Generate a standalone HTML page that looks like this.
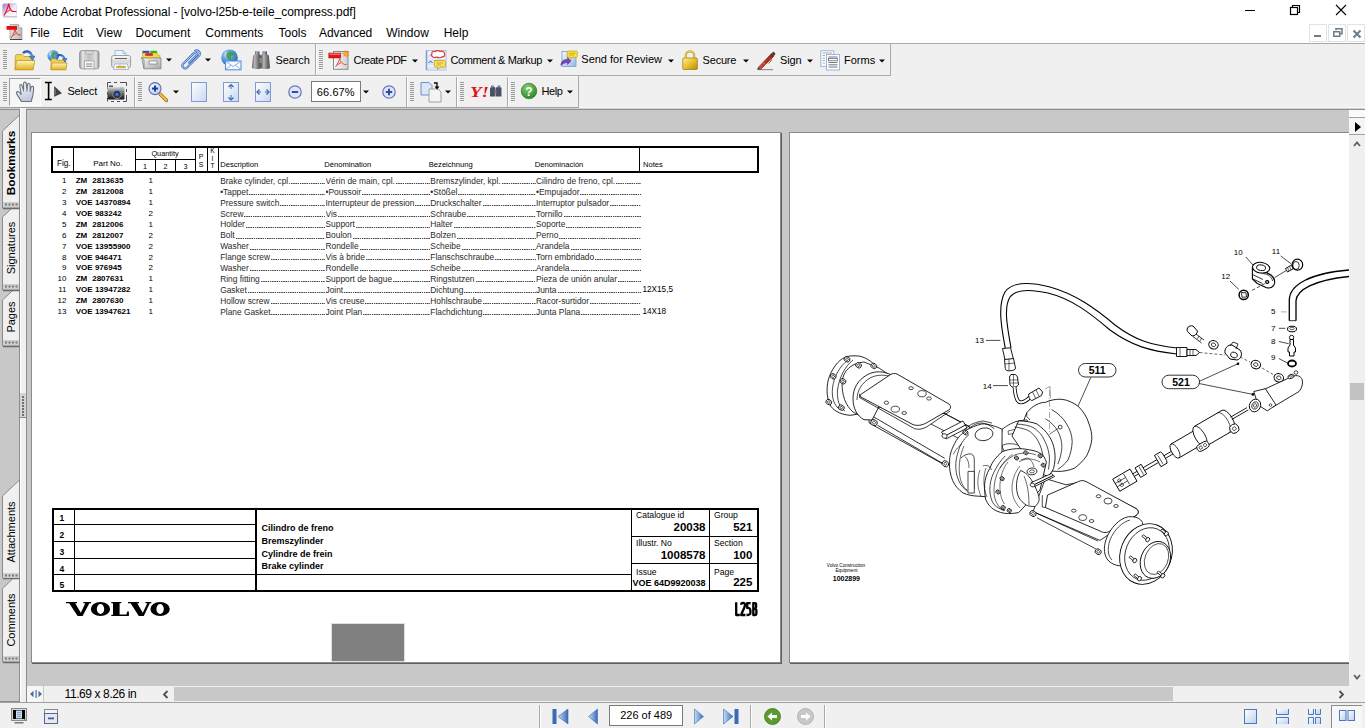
<!DOCTYPE html>
<html><head><meta charset="utf-8">
<style>
*{margin:0;padding:0;box-sizing:border-box}
html,body{width:1365px;height:728px;overflow:hidden;background:#f0f0f0;font-family:"Liberation Sans",sans-serif;color:#000;position:relative}
.a{position:absolute}
.t{position:absolute;white-space:nowrap;line-height:1}
svg{overflow:visible}
</style></head><body>

<div class="a" style="left:0px;top:0px;width:1365px;height:43px;background:#fff"></div>
<div class="t" style="left:23.50px;top:5.64px;font-size:12px;font-weight:normal;color:#000;letter-spacing:-0.05px;font-family:'Liberation Sans',sans-serif;">Adobe Acrobat Professional - [volvo-l25b-e-teile_compress.pdf]</div>
<svg class="a" style="left:2px;top:3px" width="16" height="15" viewBox="0 0 16 15"><defs><linearGradient id="tig" x1="0" y1="0" x2="1" y2="1"><stop offset="0" stop-color="#a070d0"/><stop offset="0.55" stop-color="#f4e8fa"/><stop offset="1" stop-color="#fff"/></linearGradient></defs><rect x="0.5" y="0.5" width="14" height="13" rx="2" fill="url(#tig)" stroke="#d0d0d0" stroke-width="0.6"/><rect x="1" y="13" width="14" height="1.5" fill="#c8c8c8"/><path d="M2 12.5C4 9 6 5 6.7 0.6C7 4 8.5 7 10.5 8.5H14.5" fill="none" stroke="#e01818" stroke-width="1.2"/><path d="M8.8 6.5C7.5 7.5 6 8 4.5 9.5" fill="none" stroke="#e01818" stroke-width="1"/></svg>
<svg class="a" style="left:6px;top:24px" width="17" height="16" viewBox="0 0 17 16"><defs><linearGradient id="mig" x1="0" y1="0" x2="1" y2="0"><stop offset="0" stop-color="#e0e0e0"/><stop offset="1" stop-color="#bcbcbc"/></linearGradient></defs><path d="M4 0.5H12.5L16 4V15.5H4Z" fill="url(#mig)" stroke="#999" stroke-width="0.7"/><path d="M12.5 0.5V4H16" fill="#f4f4f4" stroke="#999" stroke-width="0.6"/><rect x="4" y="15" width="12" height="1" fill="#444"/><rect x="0.5" y="2" width="10.5" height="3.8" fill="#e41010"/><path d="M5 14C7 11 8.5 8 9 5.5C9.5 8 10.5 10 13 11H15" fill="none" stroke="#e83030" stroke-width="1"/><path d="M10.2 9.5C9 10.2 8 10.8 7 11.8" fill="none" stroke="#e83030" stroke-width="0.8"/></svg>
<div class="a" style="left:1245px;top:10px;width:10px;height:1px;background:#000"></div>
<svg class="a" style="left:1289px;top:4px" width="12" height="12" viewBox="0 0 12 12"><rect x="1.5" y="3.5" width="7" height="7" fill="none" stroke="#000" stroke-width="1.2"/><path d="M3.5 3.5V1.5h7v7h-2" fill="none" stroke="#000" stroke-width="1.2"/></svg>
<svg class="a" style="left:1335px;top:4px" width="12" height="12" viewBox="0 0 12 12"><path d="M1 1L11 11M11 1L1 11" stroke="#000" stroke-width="1.1"/></svg>
<div class="t" style="left:30.30px;top:27.04px;font-size:12px;font-weight:normal;color:#000;font-family:'Liberation Sans',sans-serif;">File</div>
<div class="t" style="left:62.40px;top:27.04px;font-size:12px;font-weight:normal;color:#000;font-family:'Liberation Sans',sans-serif;">Edit</div>
<div class="t" style="left:96.00px;top:27.04px;font-size:12px;font-weight:normal;color:#000;font-family:'Liberation Sans',sans-serif;">View</div>
<div class="t" style="left:135.60px;top:27.04px;font-size:12px;font-weight:normal;color:#000;font-family:'Liberation Sans',sans-serif;">Document</div>
<div class="t" style="left:205.30px;top:27.04px;font-size:12px;font-weight:normal;color:#000;font-family:'Liberation Sans',sans-serif;">Comments</div>
<div class="t" style="left:278.50px;top:27.04px;font-size:12px;font-weight:normal;color:#000;font-family:'Liberation Sans',sans-serif;">Tools</div>
<div class="t" style="left:318.90px;top:27.04px;font-size:12px;font-weight:normal;color:#000;font-family:'Liberation Sans',sans-serif;">Advanced</div>
<div class="t" style="left:386.20px;top:27.04px;font-size:12px;font-weight:normal;color:#000;font-family:'Liberation Sans',sans-serif;">Window</div>
<div class="t" style="left:443.70px;top:27.04px;font-size:12px;font-weight:normal;color:#000;font-family:'Liberation Sans',sans-serif;">Help</div>
<div class="a" style="left:1309px;top:24px;width:18px;height:18px;border:1px solid #e3e3e3;background:#fff"></div>
<div class="a" style="left:1328px;top:24px;width:18px;height:18px;border:1px solid #e3e3e3;background:#fff"></div>
<div class="a" style="left:1347px;top:24px;width:18px;height:18px;border:1px solid #e3e3e3;background:#fff"></div>
<div class="a" style="left:1314px;top:35px;width:7px;height:2px;background:#6d7b8b"></div>
<svg class="a" style="left:1333px;top:28px" width="10" height="10" viewBox="0 0 10 10"><rect x="0.75" y="3.75" width="6" height="4.5" fill="none" stroke="#6d7b8b" stroke-width="1.5"/><path d="M3 2.2V0.75h6v5H7.2" fill="none" stroke="#6d7b8b" stroke-width="1.5"/></svg>
<svg class="a" style="left:1352px;top:29px" width="10" height="10" viewBox="0 0 10 10"><path d="M1.5 1.5L8.5 8.5M8.5 1.5L1.5 8.5" stroke="#6d7b8b" stroke-width="2"/></svg>
<div class="a" style="left:0px;top:43px;width:1365px;height:1px;background:#a9a9a9"></div>
<div class="a" style="left:0px;top:44px;width:1365px;height:64px;background:#f0f0f0"></div>
<div class="a" style="left:0px;top:75px;width:891px;height:1px;background:#a9a9a9"></div>
<svg class="a" style="left:3px;top:50px" width="4" height="20" viewBox="0 0 4 20"><rect x="0" y="0" width="4" height="1" fill="#9a9a9a"/><rect x="0" y="2" width="4" height="1" fill="#9a9a9a"/><rect x="0" y="4" width="4" height="1" fill="#9a9a9a"/><rect x="0" y="6" width="4" height="1" fill="#9a9a9a"/><rect x="0" y="8" width="4" height="1" fill="#9a9a9a"/><rect x="0" y="10" width="4" height="1" fill="#9a9a9a"/><rect x="0" y="12" width="4" height="1" fill="#9a9a9a"/><rect x="0" y="14" width="4" height="1" fill="#9a9a9a"/><rect x="0" y="16" width="4" height="1" fill="#9a9a9a"/><rect x="0" y="18" width="4" height="1" fill="#9a9a9a"/></svg>
<svg class="a" style="left:14px;top:50px" width="22" height="21" viewBox="0 0 22 21"><defs><linearGradient id="fold" x1="0" y1="0" x2="0" y2="1"><stop offset="0" stop-color="#fff6b8"/><stop offset="1" stop-color="#e0b020"/></linearGradient>
<linearGradient id="arw" x1="0" y1="0" x2="1" y2="1"><stop offset="0" stop-color="#2050a0"/><stop offset="1" stop-color="#60a0e8"/></linearGradient></defs>
<path d="M1.2 19.5V6.5C1.2 5.5 2 4.5 3 4.5H8L10 6.5H17C18 6.5 19 7.3 19 8.3V19.5Z" fill="#f0d060" stroke="#c09a22" stroke-width="0.8"/>
<path d="M1 19.8L2.5 10.5H20.8L19 19.8Z" fill="url(#fold)" stroke="#c09a22" stroke-width="0.8"/>
<path d="M9 3.2C11 0.8 15.5 0.5 17.5 4.5L18.5 6.5" fill="none" stroke="url(#arw)" stroke-width="2.4"/><path d="M15.2 6.2L21 6L18.5 10.5Z" fill="#4a88d8" stroke="#2050a0" stroke-width="0.5"/></svg>
<svg class="a" style="left:46px;top:50px" width="22" height="21" viewBox="0 0 22 21"><defs><radialGradient id="gl2" cx="0.35" cy="0.3" r="0.75"><stop offset="0" stop-color="#e8f4ff"/><stop offset="0.4" stop-color="#6aa8ec"/><stop offset="1" stop-color="#2060b8"/></radialGradient></defs>
<circle cx="7.2" cy="5.8" r="5.8" fill="url(#gl2)"/><path d="M6 1.5C8 1.2 10 2 11 3.5C10 4.5 8.5 4 8 5.5C7.5 7 8.5 8 8 9C7 9 6 7.5 5.5 6.5C5 5.5 4.5 4 6 1.5Z" fill="#3c9a3a" opacity="0.8"/>
<path d="M5 19.5V10C5 9.3 5.5 8.8 6.2 8.8H10L11.5 10.3H18.5C19.2 10.3 19.7 10.8 19.7 11.5V19.5Z" fill="#f0d060" stroke="#c09a22" stroke-width="0.8"/>
<path d="M4.8 19.8L6 13H21L19.8 19.8Z" fill="url(#fold)" stroke="#c09a22" stroke-width="0.8"/>
<path d="M11.5 6C13.5 4.5 17 4.8 18.5 8L19 9" fill="none" stroke="url(#arw)" stroke-width="2"/><path d="M16.3 8.6L21 8.5L19 12.2Z" fill="#4a88d8" stroke="#2050a0" stroke-width="0.5"/></svg>
<svg class="a" style="left:79px;top:50px" width="21" height="20" viewBox="0 0 21 20"><defs><linearGradient id="dk" x1="0" y1="0" x2="1" y2="0"><stop offset="0" stop-color="#9a9a9a"/><stop offset="0.15" stop-color="#e0e0e0"/><stop offset="0.5" stop-color="#c0c0c0"/><stop offset="0.85" stop-color="#e0e0e0"/><stop offset="1" stop-color="#909090"/></linearGradient></defs>
<rect x="0.6" y="0.6" width="19.4" height="18.2" rx="2.5" fill="url(#dk)" stroke="#8a8a8a" stroke-width="0.8"/>
<rect x="6.5" y="1" width="7.5" height="3" fill="#d8d8d8" stroke="#9a9a9a" stroke-width="0.5"/><rect x="5.5" y="11" width="9.5" height="7.8" fill="#fafafa" stroke="#8a8a8a" stroke-width="0.6"/>
<path d="M7 14H13.5M7 16.3H13.5" stroke="#777" stroke-width="0.9"/></svg>
<svg class="a" style="left:111px;top:50px" width="20" height="20" viewBox="0 0 20 20"><defs><linearGradient id="prt" x1="0" y1="0" x2="0" y2="1"><stop offset="0" stop-color="#fafafa"/><stop offset="0.5" stop-color="#d8d8d8"/><stop offset="1" stop-color="#f0f0f0"/></linearGradient></defs><path d="M4 0.5H12L15 3.5V8H4Z" fill="#eef4ff" stroke="#8ab0d8" stroke-width="0.8"/><path d="M12 0.5V3.5H15" fill="none" stroke="#8ab0d8" stroke-width="0.7"/><rect x="0.6" y="5.5" width="19" height="12" rx="2" fill="url(#prt)" stroke="#8a8a8a" stroke-width="0.8"/><rect x="4" y="8" width="12" height="1" fill="#666"/><path d="M3.5 14H16.5L17.5 19.5H2.5Z" fill="#fff" stroke="#7aa0d0" stroke-width="0.7"/><path d="M5 16H15V18.3H5Z" fill="#e8b040"/><path d="M7 16.5L9 15.5L11 17L13 15.8" stroke="#6aa040" stroke-width="0.6" fill="none"/></svg>
<svg class="a" style="left:141px;top:50px" width="21" height="20" viewBox="0 0 21 20"><defs><linearGradient id="org" x1="0" y1="0" x2="1" y2="1"><stop offset="0" stop-color="#fafafa"/><stop offset="1" stop-color="#a8a8a8"/></linearGradient></defs><rect x="1.5" y="0.8" width="6.8" height="2.6" fill="#1a50c8"/><rect x="9.3" y="0.8" width="6.8" height="2.6" fill="#10c020"/><path d="M1.5 3H16.5V5H19V8H1.5Z" fill="#f4d84a" stroke="#c8a020" stroke-width="0.5"/><rect x="4.3" y="3.2" width="7.5" height="2.6" fill="#e02030"/><path d="M0.5 7.5L3 18.8H20V8H1Z" fill="url(#org)" stroke="#7a7a7a" stroke-width="0.7"/><path d="M0.5 7.5L3 10V18.8" fill="none" stroke="#707070" stroke-width="0.7"/><rect x="8" y="11" width="8" height="3" fill="#fff" stroke="#777" stroke-width="0.7"/></svg>
<svg class="a" style="left:166px;top:58px" width="6" height="4" viewBox="0 0 6 4"><path d="M0 0.5H6L3 3.5Z" fill="#000"/></svg>
<svg class="a" style="left:180px;top:50px" width="20" height="20" viewBox="0 0 20 20"><g transform="rotate(-45 10 10)"><path d="M6.5 11.3H17.6A1.7 1.7 0 0 0 17.6 7.9H2.6A2.7 2.7 0 0 0 2.6 13.3H19.3A3 3 0 0 0 19.3 7.3" fill="none" stroke="#3d6fc0" stroke-width="2.2"/><path d="M6.5 11.3H17.6A1.7 1.7 0 0 0 17.6 7.9H2.6A2.7 2.7 0 0 0 2.6 13.3H19.3A3 3 0 0 0 19.3 7.3" fill="none" stroke="#cfe0f8" stroke-width="0.8"/></g></svg>
<svg class="a" style="left:204.5px;top:58px" width="6" height="4" viewBox="0 0 6 4"><path d="M0 0.5H6L3 3.5Z" fill="#000"/></svg>
<svg class="a" style="left:220px;top:49px" width="22" height="22" viewBox="0 0 22 22"><defs><radialGradient id="gl" cx="0.35" cy="0.3" r="0.75"><stop offset="0" stop-color="#e8f4ff"/><stop offset="0.35" stop-color="#6aa8ec"/><stop offset="1" stop-color="#1f5fb8"/></radialGradient></defs><circle cx="9.5" cy="8.7" r="8.3" fill="url(#gl)"/><path d="M8 2.5C11 2 14 3 15.5 5.5C14 6.5 12 6 11 7.5C10 9 12 10.5 11 12C9.5 12 8.5 10 7.5 9C6.5 8 5.5 6.5 6.5 4.5Z" fill="#3c9a3a" opacity="0.85"/><path d="M16 8C17 10 17 12 16 13L15 11Z" fill="#3c9a3a"/><rect x="5.5" y="12" width="15.5" height="8.8" fill="#f8f8ff" stroke="#5a90d8" stroke-width="1.1"/><path d="M6 12.5L13.2 17.5L20.5 12.5M6 20.3L11 16M20.5 20.3L15.5 16" fill="none" stroke="#7aa8e0" stroke-width="0.9"/></svg>
<svg class="a" style="left:251px;top:50px" width="20" height="20" viewBox="0 0 20 20"><defs><linearGradient id="bn" x1="0" y1="0" x2="1" y2="0"><stop offset="0" stop-color="#5a5a5a"/><stop offset="0.3" stop-color="#b8b8b8"/><stop offset="0.7" stop-color="#707070"/><stop offset="1" stop-color="#505050"/></linearGradient></defs><rect x="4" y="1" width="4.5" height="5" rx="1" fill="url(#bn)"/><rect x="11.5" y="1" width="4.5" height="5" rx="1" fill="url(#bn)"/><rect x="4.8" y="1" width="3" height="1.2" fill="#8ab0d8"/><rect x="12.3" y="1" width="3" height="1.2" fill="#8ab0d8"/><path d="M2 6.5C2 5 3 4.5 4 4.5H8.5C9.5 4.5 10 5 10 6.5V17.5C10 18.5 9 19 6 19C3 19 1 18.5 1 17.5Z" fill="url(#bn)"/><path d="M18 6.5C18 5 17 4.5 16 4.5H11.5C10.5 4.5 10 5 10 6.5V17.5C10 18.5 11 19 14 19C17 19 19 18.5 19 17.5Z" fill="url(#bn)"/><rect x="8.5" y="8" width="3" height="5" fill="#888"/></svg>
<div class="t" style="left:275.50px;top:55.29px;font-size:11px;font-weight:normal;color:#000;letter-spacing:-0.1px;font-family:'Liberation Sans',sans-serif;">Search</div>
<div class="a" style="left:315px;top:44px;width:1px;height:31px;background:#a9a9a9"></div>
<div class="a" style="left:316px;top:44px;width:1px;height:31px;background:#fff"></div>
<svg class="a" style="left:319px;top:50px" width="4" height="20" viewBox="0 0 4 20"><rect x="0" y="0" width="4" height="1" fill="#9a9a9a"/><rect x="0" y="2" width="4" height="1" fill="#9a9a9a"/><rect x="0" y="4" width="4" height="1" fill="#9a9a9a"/><rect x="0" y="6" width="4" height="1" fill="#9a9a9a"/><rect x="0" y="8" width="4" height="1" fill="#9a9a9a"/><rect x="0" y="10" width="4" height="1" fill="#9a9a9a"/><rect x="0" y="12" width="4" height="1" fill="#9a9a9a"/><rect x="0" y="14" width="4" height="1" fill="#9a9a9a"/><rect x="0" y="16" width="4" height="1" fill="#9a9a9a"/><rect x="0" y="18" width="4" height="1" fill="#9a9a9a"/></svg>
<svg class="a" style="left:328px;top:50px" width="22" height="21" viewBox="0 0 22 21"><defs><linearGradient id="cpg" x1="0" y1="0" x2="1" y2="0"><stop offset="0" stop-color="#fafafa"/><stop offset="1" stop-color="#d0d0d0"/></linearGradient></defs><rect x="5.5" y="1.5" width="14.5" height="17.8" fill="url(#cpg)" stroke="#8a8a8a" stroke-width="1"/><rect x="0.8" y="3" width="12" height="5" fill="#e01818" stroke="#b01010" stroke-width="0.5"/><rect x="1.5" y="3.6" width="10.5" height="1.2" fill="#ff8080"/><path d="M7.5 17C9.5 14 11 11 11.7 8.5C12 11 13.5 13 16.5 14.5H18.5M13 12.5C11.5 13.5 10.5 14 9 15" fill="none" stroke="#e84848" stroke-width="1"/><path d="M17.7 0.3L18.5 2.3L20.8 1.5L19.6 3.4L21.3 4.8L19 5L18.8 7L17.5 5.3L15.7 6.3L16.4 4.3L14.5 3.2L16.7 2.7Z" fill="#ffb020" stroke="#e07000" stroke-width="0.4"/></svg>
<div class="t" style="left:353.50px;top:54.69px;font-size:11px;font-weight:normal;color:#000;letter-spacing:-0.5px;font-family:'Liberation Sans',sans-serif;">Create PDF</div>
<svg class="a" style="left:411.5px;top:58.5px" width="6" height="4" viewBox="0 0 6 4"><path d="M0 0.5H6L3 3.5Z" fill="#000"/></svg>
<svg class="a" style="left:425px;top:50px" width="22" height="21" viewBox="0 0 22 21"><rect x="1" y="0.5" width="20" height="19.5" fill="#eef3fb" stroke="#9fb8dc" stroke-width="0.8"/><rect x="1" y="0.5" width="1.3" height="19.5" fill="#7a9fd8"/><path d="M3 6H20M3 10H20M3 14H9M3 18H20" stroke="#b8cce8" stroke-width="0.8"/><path d="M7 4C6 2 8.5 0.8 10 1.6C11 0.3 14 0.3 15 1.5C17 0.6 20 1.8 19.5 3.8C20.5 5 19 7.3 17 6.8C16 8 13 8 12 7C10 8 7.5 7.5 7.5 6.2C5.8 6 5.5 4.5 7 4Z" fill="#fff" stroke="#e03030" stroke-width="1.1"/><path d="M3.5 13L5.5 11L7.5 13" fill="none" stroke="#2040d0" stroke-width="1"/><path d="M9.5 10.5H19.5C20.3 10.5 20.5 11 20.5 11.8V16C20.5 16.8 20 17.2 19.5 17.2H15L12.5 19.8V17.2H10.5C9.8 17.2 9.3 16.8 9.3 16V11.8C9.3 11 9.8 10.5 10.5 10.5Z" fill="#f8e060" stroke="#c8a020" stroke-width="0.8"/><path d="M11.5 13H18M11.5 15H16" stroke="#b89020" stroke-width="0.7"/></svg>
<div class="t" style="left:450.50px;top:54.69px;font-size:11px;font-weight:normal;color:#000;letter-spacing:-0.4px;font-family:'Liberation Sans',sans-serif;">Comment &amp; Markup</div>
<svg class="a" style="left:546.5px;top:58.5px" width="6" height="4" viewBox="0 0 6 4"><path d="M0 0.5H6L3 3.5Z" fill="#000"/></svg>
<svg class="a" style="left:560px;top:50px" width="18" height="18" viewBox="0 0 18 18"><defs><linearGradient id="sfr" x1="0" y1="0" x2="1" y2="1"><stop offset="0" stop-color="#f4f8ff"/><stop offset="1" stop-color="#9ab8e0"/></linearGradient></defs><rect x="2" y="1.5" width="14" height="15" fill="url(#sfr)" stroke="#7a9ccc" stroke-width="0.8"/><path d="M8 1H16.5C17 1 17.3 1.3 17.3 1.8V6.5C17.3 7 17 7.3 16.5 7.3H12.5L10.5 9.3V7.3H8C7.5 7.3 7.2 7 7.2 6.5V1.8C7.2 1.3 7.5 1 8 1Z" fill="#f8e040" stroke="#c8a010" stroke-width="0.7"/><path d="M9 3.3H15.5M9 5H14" stroke="#c09010" stroke-width="0.6"/><path d="M0.8 15.5C1 11 4 9.5 7.5 9.5V7.5L11 11L7.5 14.5V12.5C5 12.5 3 13.5 0.8 15.5Z" fill="#7048b8" stroke="#503090" stroke-width="0.5"/></svg>
<div class="t" style="left:581.30px;top:54.49px;font-size:11px;font-weight:normal;color:#000;font-family:'Liberation Sans',sans-serif;">Send for Review</div>
<svg class="a" style="left:667.5px;top:58.5px" width="6" height="4" viewBox="0 0 6 4"><path d="M0 0.5H6L3 3.5Z" fill="#000"/></svg>
<svg class="a" style="left:682px;top:50px" width="17" height="21" viewBox="0 0 17 21"><defs><linearGradient id="lk" x1="0" y1="0" x2="1" y2="1"><stop offset="0" stop-color="#fff0a0"/><stop offset="0.5" stop-color="#e8c030"/><stop offset="1" stop-color="#b08a10"/></linearGradient></defs><path d="M3.8 8.5V5.5A4.2 4.2 0 0 1 12.2 5.5V8.5" fill="none" stroke="#c8a018" stroke-width="2.2"/><path d="M3.8 8.5V5.5A4.2 4.2 0 0 1 12.2 5.5V8.5" fill="none" stroke="#f8e890" stroke-width="0.7"/><rect x="0.8" y="8" width="14.5" height="11.5" rx="0.8" fill="url(#lk)" stroke="#a88010" stroke-width="0.8"/></svg>
<div class="t" style="left:702.60px;top:54.69px;font-size:11px;font-weight:normal;color:#000;letter-spacing:-0.2px;font-family:'Liberation Sans',sans-serif;">Secure</div>
<svg class="a" style="left:742.5px;top:58.5px" width="6" height="4" viewBox="0 0 6 4"><path d="M0 0.5H6L3 3.5Z" fill="#000"/></svg>
<svg class="a" style="left:756px;top:50px" width="20" height="21" viewBox="0 0 20 21"><defs><linearGradient id="pn" x1="0" y1="0" x2="1" y2="0"><stop offset="0" stop-color="#e05040"/><stop offset="1" stop-color="#8a1a10"/></linearGradient></defs><path d="M2.2 17.5L15.5 3.5L18 6L4.5 19.5Z" fill="url(#pn)" stroke="#701810" stroke-width="0.6"/><path d="M15.5 3.5L17.3 1.5L19.6 3.8L18 6Z" fill="#404040"/><path d="M13 8.5C15 7.5 16 9 15 11L12.5 13.5" fill="none" stroke="#b05020" stroke-width="1"/><path d="M7 12.5L9 14.5" stroke="#e0b040" stroke-width="0.8"/><path d="M2.2 17.5L1 19.8L4.5 19.5Z" fill="#303030"/><path d="M2.5 19.7H17" stroke="#606060" stroke-width="0.8"/></svg>
<div class="t" style="left:780.00px;top:54.69px;font-size:11px;font-weight:normal;color:#000;letter-spacing:-0.1px;font-family:'Liberation Sans',sans-serif;">Sign</div>
<svg class="a" style="left:806.5px;top:58.5px" width="6" height="4" viewBox="0 0 6 4"><path d="M0 0.5H6L3 3.5Z" fill="#000"/></svg>
<svg class="a" style="left:820px;top:50px" width="20" height="21" viewBox="0 0 20 21"><rect x="0.8" y="0.8" width="13" height="15.5" fill="#fff" stroke="#8ab0e0" stroke-width="0.9"/><path d="M2.5 3H12M2.5 5.5H5M2.5 8H5M2.5 10.5H5M2.5 13H5" stroke="#888" stroke-width="0.7"/><rect x="6.5" y="4.5" width="13" height="15.5" fill="#fff" stroke="#8ab0e0" stroke-width="0.9"/><path d="M8.5 7H17.5M8.5 12.5H17.5M8.5 14.8H17.5M8.5 17H17.5" stroke="#555" stroke-width="0.8"/><rect x="8.5" y="8.6" width="9" height="2.2" fill="none" stroke="#555" stroke-width="0.7"/></svg>
<div class="t" style="left:844.00px;top:54.69px;font-size:11px;font-weight:normal;color:#000;font-family:'Liberation Sans',sans-serif;">Forms</div>
<svg class="a" style="left:879px;top:58.5px" width="6" height="4" viewBox="0 0 6 4"><path d="M0 0.5H6L3 3.5Z" fill="#000"/></svg>
<div class="a" style="left:890px;top:44px;width:1px;height:32px;background:#a9a9a9"></div>
<div class="a" style="left:0px;top:76px;width:578px;height:1px;background:#fcfcfc"></div>
<svg class="a" style="left:3px;top:82px" width="4" height="20" viewBox="0 0 4 20"><rect x="0" y="0" width="4" height="1" fill="#9a9a9a"/><rect x="0" y="2" width="4" height="1" fill="#9a9a9a"/><rect x="0" y="4" width="4" height="1" fill="#9a9a9a"/><rect x="0" y="6" width="4" height="1" fill="#9a9a9a"/><rect x="0" y="8" width="4" height="1" fill="#9a9a9a"/><rect x="0" y="10" width="4" height="1" fill="#9a9a9a"/><rect x="0" y="12" width="4" height="1" fill="#9a9a9a"/><rect x="0" y="14" width="4" height="1" fill="#9a9a9a"/><rect x="0" y="16" width="4" height="1" fill="#9a9a9a"/><rect x="0" y="18" width="4" height="1" fill="#9a9a9a"/></svg>
<div class="a" style="left:9px;top:78px;width:32px;height:28px;background:#f6f6f6;border-left:1px solid #a0a0a0;border-top:1px solid #a0a0a0;border-right:1px solid #fff;border-bottom:1px solid #fff"></div>
<svg class="a" style="left:15px;top:81px" width="20" height="21" viewBox="0 0 20 21"><defs><linearGradient id="hnd" x1="0" y1="0" x2="0.3" y2="1"><stop offset="0" stop-color="#ffffff"/><stop offset="1" stop-color="#c4c8dc"/></linearGradient></defs><path d="M6.5 20.5C5 18 3 15.5 1.5 12.5C1 11 2.5 10 4 11L6.2 13.5L4.8 5C4.6 3.5 6.6 3 7 4.5L8.5 9L8.6 2.2C8.7 0.8 11 0.8 11.2 2.2L12 9L12.5 3.5C12.7 2.2 15 2.2 15 3.8L15.3 9.5L16 6.5C16.3 5 18.7 5 18.6 6.8C18.5 10 18.3 14 17 17.5L16.2 20.5Z" fill="url(#hnd)" stroke="#6b7280" stroke-width="1.1" stroke-linejoin="round"/><path d="M8.5 9V10.5M12 9V10.5M15.3 9.5V11" stroke="#6b7280" stroke-width="0.9"/></svg>
<svg class="a" style="left:44px;top:81px" width="20" height="20" viewBox="0 0 20 20"><path d="M0.9 1.5H7.8M0.9 18.5H7.8M4.6 1.5V18.5" stroke="#000" stroke-width="1.6"/><path d="M10.2 5V15.8L18 12.3Z" fill="#444"/><path d="M11.3 8V13.5" stroke="#888" stroke-width="0.8"/></svg>
<div class="t" style="left:67.40px;top:86.19px;font-size:11px;font-weight:normal;color:#000;letter-spacing:-0.15px;font-family:'Liberation Sans',sans-serif;">Select</div>
<svg class="a" style="left:107px;top:82px" width="20" height="20" viewBox="0 0 20 20"><defs><linearGradient id="cam" x1="0" y1="0" x2="0" y2="1"><stop offset="0" stop-color="#e8e8e8"/><stop offset="0.35" stop-color="#8a8a8a"/><stop offset="1" stop-color="#101010"/></linearGradient></defs><path d="M0.5 4V0.5H4M7 0.5H10M13 0.5H16M19.5 4V0.5H16M19.5 7V10M19.5 13V19.5H16M13 19.5H10M7 19.5H4M0.5 19.5V16M0.5 13V10M0.5 7V4" fill="none" stroke="#505050" stroke-width="1"/><rect x="0.5" y="4.5" width="17" height="13" rx="1" fill="url(#cam)"/><rect x="2" y="3.5" width="4" height="1.5" fill="#555"/><rect x="13" y="5.5" width="3" height="1.5" fill="#6ac0f0"/><circle cx="10" cy="12.5" r="4.2" fill="#303848" stroke="#8a9ab0" stroke-width="0.9"/><circle cx="10" cy="12.5" r="1.8" fill="#3a70e0"/></svg>
<div class="a" style="left:134px;top:77px;width:1px;height:30px;background:#a9a9a9"></div>
<div class="a" style="left:135px;top:77px;width:1px;height:30px;background:#fff"></div>
<svg class="a" style="left:138px;top:82px" width="4" height="20" viewBox="0 0 4 20"><rect x="0" y="0" width="4" height="1" fill="#9a9a9a"/><rect x="0" y="2" width="4" height="1" fill="#9a9a9a"/><rect x="0" y="4" width="4" height="1" fill="#9a9a9a"/><rect x="0" y="6" width="4" height="1" fill="#9a9a9a"/><rect x="0" y="8" width="4" height="1" fill="#9a9a9a"/><rect x="0" y="10" width="4" height="1" fill="#9a9a9a"/><rect x="0" y="12" width="4" height="1" fill="#9a9a9a"/><rect x="0" y="14" width="4" height="1" fill="#9a9a9a"/><rect x="0" y="16" width="4" height="1" fill="#9a9a9a"/><rect x="0" y="18" width="4" height="1" fill="#9a9a9a"/></svg>
<svg class="a" style="left:148px;top:82px" width="21" height="21" viewBox="0 0 21 21"><defs><radialGradient id="zl" cx="0.4" cy="0.35" r="0.7"><stop offset="0" stop-color="#ffffff"/><stop offset="1" stop-color="#a8c8f0"/></radialGradient></defs><path d="M12 12L18.5 18.5" stroke="#a06010" stroke-width="3.2" stroke-linecap="round"/><path d="M12 12L18.5 18.5" stroke="#f0c840" stroke-width="1.8" stroke-linecap="round"/><circle cx="7" cy="6.6" r="6" fill="url(#zl)" stroke="#6a68b8" stroke-width="1.1"/><path d="M4 6.6H10M7 3.6V9.6" stroke="#1a3a98" stroke-width="2"/></svg>
<svg class="a" style="left:172.5px;top:89.5px" width="6" height="4" viewBox="0 0 6 4"><path d="M0 0.5H6L3 3.5Z" fill="#000"/></svg>
<svg class="a" style="left:191px;top:82px" width="17" height="21" viewBox="0 0 17 21"><defs><linearGradient id="pg" x1="0" y1="0" x2="1" y2="1"><stop offset="0" stop-color="#fff"/><stop offset="1" stop-color="#c8d8f0"/></linearGradient></defs><rect x="0.5" y="0.5" width="15" height="19" fill="url(#pg)" stroke="#7c9cd0" stroke-width="1"/></svg>
<svg class="a" style="left:223px;top:82px" width="17" height="21" viewBox="0 0 17 21"><rect x="0.5" y="0.5" width="15" height="19" fill="url(#pg)" stroke="#7c9cd0" stroke-width="1"/><path d="M8 3v4M8 13v5" stroke="#3a64b0" stroke-width="1"/><path d="M5.5 5L8 2.5 10.5 5M5.5 15.5L8 18l2.5-2.5" fill="none" stroke="#3a64b0" stroke-width="1.2"/></svg>
<svg class="a" style="left:255px;top:82px" width="17" height="21" viewBox="0 0 17 21"><rect x="0.5" y="0.5" width="15" height="19" fill="url(#pg)" stroke="#7c9cd0" stroke-width="1"/><path d="M2 10h4M10 10h4" stroke="#3a64b0" stroke-width="1"/><path d="M4.5 7.5L2 10l2.5 2.5M11.5 7.5L14 10l-2.5 2.5" fill="none" stroke="#3a64b0" stroke-width="1.2"/></svg>
<svg class="a" style="left:288px;top:85px" width="14" height="14" viewBox="0 0 14 14"><circle cx="7" cy="7" r="6.2" fill="#dfe6fb" stroke="#6a7ab8" stroke-width="1.3"/><path d="M3.8 7h6.4" stroke="#3050a8" stroke-width="2"/></svg>
<div class="a" style="left:311px;top:81px;width:50px;height:21px;background:#fff;border:1px solid #7a7a7a"></div>
<div class="t" style="left:316.80px;top:86.69px;font-size:11px;font-weight:normal;color:#000;letter-spacing:0.1px;font-family:'Liberation Sans',sans-serif;">66.67%</div>
<svg class="a" style="left:362.5px;top:89.5px" width="6" height="4" viewBox="0 0 6 4"><path d="M0 0.5H6L3 3.5Z" fill="#000"/></svg>
<svg class="a" style="left:382px;top:85px" width="14" height="14" viewBox="0 0 14 14"><circle cx="7" cy="7" r="6.2" fill="#dfe6fb" stroke="#6a7ab8" stroke-width="1.3"/><path d="M3.8 7h6.4M7 3.8v6.4" stroke="#3050a8" stroke-width="2"/></svg>
<div class="a" style="left:406px;top:77px;width:1px;height:30px;background:#a9a9a9"></div>
<div class="a" style="left:407px;top:77px;width:1px;height:30px;background:#fff"></div>
<svg class="a" style="left:410px;top:82px" width="4" height="20" viewBox="0 0 4 20"><rect x="0" y="0" width="4" height="1" fill="#9a9a9a"/><rect x="0" y="2" width="4" height="1" fill="#9a9a9a"/><rect x="0" y="4" width="4" height="1" fill="#9a9a9a"/><rect x="0" y="6" width="4" height="1" fill="#9a9a9a"/><rect x="0" y="8" width="4" height="1" fill="#9a9a9a"/><rect x="0" y="10" width="4" height="1" fill="#9a9a9a"/><rect x="0" y="12" width="4" height="1" fill="#9a9a9a"/><rect x="0" y="14" width="4" height="1" fill="#9a9a9a"/><rect x="0" y="16" width="4" height="1" fill="#9a9a9a"/><rect x="0" y="18" width="4" height="1" fill="#9a9a9a"/></svg>
<svg class="a" style="left:420px;top:82px" width="21" height="21" viewBox="0 0 21 21"><path d="M1 0.5h8l3 3V13H1z" fill="#dbe6f7" stroke="#6c8fc8" stroke-width="1"/><path d="M9 7h9l3 3v10H9z" fill="#f4f4f4" stroke="#a0a0a0" stroke-width="1"/>
<path d="M14 1h3v4" fill="none" stroke="#000" stroke-width="1.3"/><path d="M14.5 4.5h5L17 7.5z" fill="#000"/></svg>
<svg class="a" style="left:444.5px;top:89.5px" width="6" height="4" viewBox="0 0 6 4"><path d="M0 0.5H6L3 3.5Z" fill="#000"/></svg>
<div class="a" style="left:456px;top:77px;width:1px;height:30px;background:#a9a9a9"></div>
<div class="a" style="left:457px;top:77px;width:1px;height:30px;background:#fff"></div>
<svg class="a" style="left:460px;top:82px" width="4" height="20" viewBox="0 0 4 20"><rect x="0" y="0" width="4" height="1" fill="#9a9a9a"/><rect x="0" y="2" width="4" height="1" fill="#9a9a9a"/><rect x="0" y="4" width="4" height="1" fill="#9a9a9a"/><rect x="0" y="6" width="4" height="1" fill="#9a9a9a"/><rect x="0" y="8" width="4" height="1" fill="#9a9a9a"/><rect x="0" y="10" width="4" height="1" fill="#9a9a9a"/><rect x="0" y="12" width="4" height="1" fill="#9a9a9a"/><rect x="0" y="14" width="4" height="1" fill="#9a9a9a"/><rect x="0" y="16" width="4" height="1" fill="#9a9a9a"/><rect x="0" y="18" width="4" height="1" fill="#9a9a9a"/></svg>
<svg class="a" style="left:470px;top:84px" width="33" height="14" viewBox="0 0 33 14"><text x="0" y="12.5" font-family="Liberation Serif" font-weight="bold" font-style="italic" font-size="15" fill="#e01020" textLength="19" lengthAdjust="spacingAndGlyphs">Y!</text><path d="M20 4.5C20 3.5 21 3 22 3H24C25 3 25.5 3.5 25.5 4.5V12.5H20Z" fill="#4a5260"/><path d="M26 4.5C26 3.5 26.5 3 27.5 3H29.5C30.5 3 31.5 3.5 31.5 4.5V12.5H26Z" fill="#4a5260"/><rect x="21" y="1.5" width="3" height="2" fill="#6a8ac0"/><rect x="27.5" y="1.5" width="3" height="2" fill="#6a8ac0"/><rect x="24.5" y="6" width="2" height="3" fill="#777"/></svg>
<div class="a" style="left:507px;top:77px;width:1px;height:30px;background:#a9a9a9"></div>
<div class="a" style="left:508px;top:77px;width:1px;height:30px;background:#fff"></div>
<svg class="a" style="left:511px;top:82px" width="4" height="20" viewBox="0 0 4 20"><rect x="0" y="0" width="4" height="1" fill="#9a9a9a"/><rect x="0" y="2" width="4" height="1" fill="#9a9a9a"/><rect x="0" y="4" width="4" height="1" fill="#9a9a9a"/><rect x="0" y="6" width="4" height="1" fill="#9a9a9a"/><rect x="0" y="8" width="4" height="1" fill="#9a9a9a"/><rect x="0" y="10" width="4" height="1" fill="#9a9a9a"/><rect x="0" y="12" width="4" height="1" fill="#9a9a9a"/><rect x="0" y="14" width="4" height="1" fill="#9a9a9a"/><rect x="0" y="16" width="4" height="1" fill="#9a9a9a"/><rect x="0" y="18" width="4" height="1" fill="#9a9a9a"/></svg>
<svg class="a" style="left:521px;top:83px" width="17" height="17" viewBox="0 0 17 17"><defs><radialGradient id="hg" cx="0.4" cy="0.3" r="0.7"><stop offset="0" stop-color="#8ad06a"/><stop offset="1" stop-color="#2a8a2a"/></radialGradient></defs><circle cx="8" cy="8" r="7.8" fill="url(#hg)" stroke="#2a6a2a" stroke-width="0.6"/>
<text x="8" y="12.5" text-anchor="middle" font-family="Liberation Sans" font-weight="bold" font-size="12" fill="#fff">?</text></svg>
<div class="t" style="left:541.40px;top:86.19px;font-size:11px;font-weight:normal;color:#000;letter-spacing:-0.35px;font-family:'Liberation Sans',sans-serif;">Help</div>
<svg class="a" style="left:566.5px;top:89.5px" width="6" height="4" viewBox="0 0 6 4"><path d="M0 0.5H6L3 3.5Z" fill="#000"/></svg>
<div class="a" style="left:578px;top:76px;width:1px;height:31px;background:#a9a9a9"></div>
<div class="a" style="left:0px;top:107px;width:1365px;height:1px;background:#fafafa"></div>
<div class="a" style="left:0px;top:107px;width:579px;height:1px;background:#a0a0a0"></div>
<div class="a" style="left:0px;top:108px;width:1365px;height:578px;background:#c8c8c8"></div>
<div class="a" style="left:0px;top:686px;width:20px;height:16px;background:#c8c8c8;border-bottom:1px solid #8c8c8c"></div>
<div class="a" style="left:0px;top:108px;width:1365px;height:1px;background:#d0d0d0"></div>
<div class="a" style="left:0px;top:109px;width:1365px;height:1px;background:#909090"></div>
<div class="a" style="left:19px;top:109px;width:1px;height:594px;background:#8c8c8c"></div>
<div class="a" style="left:20px;top:108px;width:6px;height:595px;background:#f0f0f0"></div>
<div class="a" style="left:20px;top:108px;width:1px;height:595px;background:#fff"></div>
<div class="a" style="left:26px;top:109px;width:1px;height:594px;background:#8c8c8c"></div>
<div class="a" style="left:20px;top:393px;width:6px;height:25px;background:#d4d4d4;border-bottom:1px solid #8a8a8a"></div>
<svg class="a" style="left:21px;top:396px" width="4" height="20" viewBox="0 0 4 20"><rect x="1" y="0" width="2" height="2" fill="#707070"/><rect x="1" y="3" width="2" height="2" fill="#707070"/><rect x="1" y="6" width="2" height="2" fill="#707070"/><rect x="1" y="9" width="2" height="2" fill="#707070"/><rect x="1" y="12" width="2" height="2" fill="#707070"/><rect x="1" y="15" width="2" height="2" fill="#707070"/><rect x="1" y="18" width="2" height="2" fill="#707070"/></svg>
<svg class="a" style="left:0;top:0" width="22" height="700"><path d="M19.5 572 L2.5 588.7 V662 H19.5 Z" fill="#f0f0f0" stroke="#8a8a8a" stroke-width="1"/><path d="M3 662.5H19.5" stroke="#6a6a6a" stroke-width="1.5"/><rect x="3" y="656" width="16" height="5" fill="#cfcfcf"/><rect x="5.0" y="657.5" width="2" height="2" fill="#7a7a7a"/><rect x="8.5" y="657.5" width="2" height="2" fill="#7a7a7a"/><rect x="12.0" y="657.5" width="2" height="2" fill="#7a7a7a"/><rect x="15.5" y="657.5" width="2" height="2" fill="#7a7a7a"/></svg>
<div class="t" style="left:11px;top:619.6px;font-size:11px;font-weight:normal;transform:translate(-50%,-50%) rotate(-90deg) scaleX(1.0);color:#000">Comments</div>
<svg class="a" style="left:0;top:0" width="22" height="700"><path d="M19.5 480 L2.5 496 V578 H19.5 Z" fill="#f0f0f0" stroke="#8a8a8a" stroke-width="1"/><path d="M3 578.5H19.5" stroke="#6a6a6a" stroke-width="1.5"/><rect x="3" y="573" width="16" height="5" fill="#cfcfcf"/><rect x="5.0" y="574.5" width="2" height="2" fill="#7a7a7a"/><rect x="8.5" y="574.5" width="2" height="2" fill="#7a7a7a"/><rect x="12.0" y="574.5" width="2" height="2" fill="#7a7a7a"/><rect x="15.5" y="574.5" width="2" height="2" fill="#7a7a7a"/></svg>
<div class="t" style="left:11px;top:531.55px;font-size:11px;font-weight:normal;transform:translate(-50%,-50%) rotate(-90deg) scaleX(1.0);color:#000">Attachments</div>
<svg class="a" style="left:0;top:0" width="22" height="700"><path d="M19.5 284 L2.5 300 V346 H19.5 Z" fill="#f0f0f0" stroke="#8a8a8a" stroke-width="1"/><path d="M3 346.5H19.5" stroke="#6a6a6a" stroke-width="1.5"/><rect x="3" y="340" width="16" height="5" fill="#cfcfcf"/><rect x="5.0" y="341.5" width="2" height="2" fill="#7a7a7a"/><rect x="8.5" y="341.5" width="2" height="2" fill="#7a7a7a"/><rect x="12.0" y="341.5" width="2" height="2" fill="#7a7a7a"/><rect x="15.5" y="341.5" width="2" height="2" fill="#7a7a7a"/></svg>
<div class="t" style="left:11px;top:316.7px;font-size:11px;font-weight:normal;transform:translate(-50%,-50%) rotate(-90deg) scaleX(1.0);color:#000">Pages</div>
<svg class="a" style="left:0;top:0" width="22" height="700"><path d="M19.5 201 L2.5 217 V290 H19.5 Z" fill="#f0f0f0" stroke="#8a8a8a" stroke-width="1"/><path d="M3 290.5H19.5" stroke="#6a6a6a" stroke-width="1.5"/><rect x="3" y="284" width="16" height="5" fill="#cfcfcf"/><rect x="5.0" y="285.5" width="2" height="2" fill="#7a7a7a"/><rect x="8.5" y="285.5" width="2" height="2" fill="#7a7a7a"/><rect x="12.0" y="285.5" width="2" height="2" fill="#7a7a7a"/><rect x="15.5" y="285.5" width="2" height="2" fill="#7a7a7a"/></svg>
<div class="t" style="left:11px;top:247.85px;font-size:11px;font-weight:normal;transform:translate(-50%,-50%) rotate(-90deg) scaleX(1.0);color:#000">Signatures</div>
<svg class="a" style="left:0;top:0" width="22" height="700"><path d="M19.5 115 L2.5 131 V208 H19.5 Z" fill="#f0f0f0" stroke="#8a8a8a" stroke-width="1"/><path d="M3 208.5H19.5" stroke="#6a6a6a" stroke-width="1.5"/><rect x="3" y="202" width="16" height="5" fill="#cfcfcf"/><rect x="5.0" y="203.5" width="2" height="2" fill="#7a7a7a"/><rect x="8.5" y="203.5" width="2" height="2" fill="#7a7a7a"/><rect x="12.0" y="203.5" width="2" height="2" fill="#7a7a7a"/><rect x="15.5" y="203.5" width="2" height="2" fill="#7a7a7a"/></svg>
<div class="t" style="left:11px;top:163.25px;font-size:11px;font-weight:bold;transform:translate(-50%,-50%) rotate(-90deg) scaleX(1.077);color:#000">Bookmarks</div>
<div class="a" style="left:31px;top:132px;width:750px;height:531px;background:#fff;border:1px solid #8a8a8a;box-shadow:1px 1px 0 #606060"></div>
<div class="a" style="left:789px;top:132px;width:576px;height:531px;background:#fff;border:1px solid #8a8a8a;box-shadow:1px 1px 0 #606060"></div>
<div class="a" style="left:1349px;top:110px;width:16px;height:576px;background:#f0f0f0"></div>
<div class="a" style="left:1349px;top:110px;width:16px;height:7px;background:#fafafa"></div>
<div class="a" style="left:1349px;top:117px;width:16px;height:1px;background:#a0a0a0"></div>
<div class="a" style="left:1349px;top:118px;width:16px;height:16px;background:#f5f5f5"></div>
<div class="a" style="left:1349px;top:134px;width:16px;height:1px;background:#a0a0a0"></div>
<svg class="a" style="left:1355px;top:122px" width="6" height="10" viewBox="0 0 6 10"><path d="M0 0L6 5 0 10z" fill="#000"/></svg>
<svg class="a" style="left:1353px;top:141px" width="8" height="6" viewBox="0 0 8 6"><path d="M1 5L4 1.5 7 5" fill="none" stroke="#606060" stroke-width="1.8"/></svg>
<div class="a" style="left:1350px;top:383px;width:14px;height:17px;background:#c2c2c2"></div>
<svg class="a" style="left:1353px;top:674px" width="8" height="6" viewBox="0 0 8 6"><path d="M1 1L4 4.5 7 1" fill="none" stroke="#606060" stroke-width="1.8"/></svg>
<div class="a" style="left:27px;top:686px;width:1338px;height:17px;background:#f0f0f0"></div>
<div class="a" style="left:27px;top:686px;width:17px;height:16px;background:#f6f6f6;border-right:1px solid #c8c8c8"></div>
<svg class="a" style="left:30px;top:690px" width="12" height="8" viewBox="0 0 12 8"><path d="M0 4L3.5 0.8V7.2z M12 4L8.5 0.8V7.2z" fill="#4a6a9a"/><rect x="5.5" y="0" width="1.2" height="8" fill="#4a6a9a"/></svg>
<div class="t" style="left:64.50px;top:688.34px;font-size:12px;font-weight:normal;color:#000;letter-spacing:-0.4px;font-family:'Liberation Sans',sans-serif;">11.69 x 8.26 in</div>
<svg class="a" style="left:162px;top:690px" width="7" height="9" viewBox="0 0 7 9"><path d="M5.5 1L2 4.5 5.5 8" fill="none" stroke="#505050" stroke-width="1.8"/></svg>
<div class="a" style="left:174px;top:687px;width:999px;height:14px;background:#c8c8c8"></div>
<svg class="a" style="left:1338px;top:690px" width="7" height="9" viewBox="0 0 7 9"><path d="M1.5 1L5 4.5 1.5 8" fill="none" stroke="#505050" stroke-width="1.8"/></svg>
<div class="a" style="left:0px;top:702px;width:1365px;height:1px;background:#a0a0a0"></div>
<div class="a" style="left:0px;top:703px;width:1365px;height:25px;background:#f0f0f0"></div>
<svg class="a" style="left:11px;top:708px" width="16" height="16" viewBox="0 0 16 16"><rect x="0.5" y="0.5" width="15" height="12" fill="#d8d8d8" stroke="#8a8a8a" stroke-width="1"/><rect x="2" y="2" width="12" height="9" fill="#000"/><rect x="5" y="2.5" width="6" height="8" fill="#c8dcf4"/>
<path d="M6 4.5h4M6 6.5h4M6 8.5h4" stroke="#8090a8" stroke-width="0.8"/><rect x="13" y="11" width="1.5" height="1.5" fill="#20d020"/><rect x="3.5" y="14" width="9" height="1.5" fill="#7a7a7a"/></svg>
<svg class="a" style="left:44px;top:709px" width="14" height="15" viewBox="0 0 14 15"><rect x="0.5" y="0.5" width="13" height="14" fill="#f4f4f4" stroke="#8a8a8a" stroke-width="1"/><rect x="0.5" y="4.5" width="13" height="10" fill="#e8e8e8" stroke="#4a6aa0" stroke-width="1"/><rect x="4" y="8.5" width="6" height="1.8" fill="#4a5aaa"/></svg>
<svg width="0" height="0" class="a"><defs><linearGradient id="nb" x1="0" y1="0" x2="1" y2="0"><stop offset="0" stop-color="#c8dcf4"/><stop offset="1" stop-color="#3a6ab8"/></linearGradient><linearGradient id="vb" x1="0" y1="0" x2="1" y2="1"><stop offset="0" stop-color="#fff"/><stop offset="1" stop-color="#bcd0ee"/></linearGradient></defs></svg>
<div class="a" style="left:539px;top:705px;width:1px;height:23px;background:#a9a9a9"></div>
<div class="a" style="left:540px;top:705px;width:1px;height:23px;background:#fff"></div>
<svg class="a" style="left:552px;top:709px" width="17" height="15" viewBox="0 0 17 15"><rect x="0.5" y="0" width="4" height="15" fill="#3a6ab8"/><path d="M16 0V15L6 7.5z" fill="url(#nb)" stroke="#3a6ab8" stroke-width="0.6"/></svg>
<svg class="a" style="left:588px;top:709px" width="10" height="15" viewBox="0 0 10 15"><path d="M9.5 0V15L0.5 7.5z" fill="url(#nb)" stroke="#3a6ab8" stroke-width="0.6"/></svg>
<div class="a" style="left:609px;top:705px;width:74px;height:21px;background:#fff;border:1px solid #7a7a7a"></div>
<div class="t" style="left:620.20px;top:710.19px;font-size:11px;font-weight:normal;color:#000;font-family:'Liberation Sans',sans-serif;">226 of 489</div>
<svg class="a" style="left:694px;top:709px" width="10" height="15" viewBox="0 0 10 15"><path d="M0.5 0V15L9.5 7.5z" fill="url(#nb)" stroke="#3a6ab8" stroke-width="0.6"/></svg>
<svg class="a" style="left:723px;top:709px" width="16" height="15" viewBox="0 0 16 15"><path d="M0.5 0V15L10 7.5z" fill="url(#nb)" stroke="#3a6ab8" stroke-width="0.6"/><rect x="11.5" y="0" width="4" height="15" fill="#3a6ab8"/></svg>
<div class="a" style="left:750px;top:705px;width:1px;height:23px;background:#a9a9a9"></div>
<div class="a" style="left:751px;top:705px;width:1px;height:23px;background:#fff"></div>
<svg class="a" style="left:764px;top:708px" width="17" height="17" viewBox="0 0 17 17"><circle cx="8.5" cy="8.5" r="8" fill="#5a9a30" stroke="#3a7a20" stroke-width="0.8"/><path d="M3.5 8.5L8 4.5V7h5v3H8v2.5z" fill="#fff"/></svg>
<svg class="a" style="left:797px;top:708px" width="17" height="17" viewBox="0 0 17 17"><circle cx="8.5" cy="8.5" r="8" fill="#c8c8c8" stroke="#aaa" stroke-width="0.8"/><path d="M13.5 8.5L9 4.5V7H4v3h5v2.5z" fill="#fff"/></svg>
<div class="a" style="left:824px;top:705px;width:1px;height:23px;background:#a9a9a9"></div>
<div class="a" style="left:825px;top:705px;width:1px;height:23px;background:#fff"></div>
<svg class="a" style="left:1244px;top:709px" width="13" height="15" viewBox="0 0 13 15"><rect x="0.5" y="0.5" width="12" height="14" fill="url(#vb)" stroke="#4a78c0" stroke-width="1"/></svg>
<svg class="a" style="left:1276px;top:709px" width="13" height="15" viewBox="0 0 13 15"><path d="M0.5 0V5.5H12.5V0" fill="url(#vb)" stroke="#4a78c0" stroke-width="1"/><path d="M0.5 15V8.5H12.5V15" fill="url(#vb)" stroke="#4a78c0" stroke-width="1"/></svg>
<svg class="a" style="left:1308px;top:709px" width="13" height="15" viewBox="0 0 13 15"><path d="M0.5 0V5.5H5.5V0M7.5 0V5.5H12.5V0" fill="url(#vb)" stroke="#4a78c0" stroke-width="1"/><path d="M0.5 15V8.5H5.5V15M7.5 15V8.5H12.5V15" fill="url(#vb)" stroke="#4a78c0" stroke-width="1"/></svg>
<div class="a" style="left:1331px;top:705px;width:31px;height:23px;background:#f7f7f7;border-left:1px solid #8a8a8a;border-top:1px solid #8a8a8a"></div>
<svg class="a" style="left:1339px;top:710px" width="16" height="11" viewBox="0 0 16 11"><rect x="0.5" y="0.5" width="6.5" height="10" fill="url(#vb)" stroke="#4a78c0" stroke-width="1"/><rect x="9" y="0.5" width="6.5" height="10" fill="url(#vb)" stroke="#4a78c0" stroke-width="1"/></svg>
<div class="a" style="left:51px;top:146px;width:708px;height:2px;background:#000"></div>
<div class="a" style="left:51px;top:171px;width:708px;height:2px;background:#000"></div>
<div class="a" style="left:51px;top:146px;width:2px;height:27px;background:#000"></div>
<div class="a" style="left:757px;top:146px;width:2px;height:27px;background:#000"></div>
<div class="a" style="left:73px;top:148px;width:1px;height:23px;background:#000"></div>
<div class="a" style="left:135px;top:148px;width:1px;height:23px;background:#000"></div>
<div class="a" style="left:195px;top:148px;width:1px;height:23px;background:#000"></div>
<div class="a" style="left:207px;top:148px;width:1px;height:23px;background:#000"></div>
<div class="a" style="left:218px;top:148px;width:1px;height:23px;background:#000"></div>
<div class="a" style="left:639px;top:148px;width:1px;height:23px;background:#000"></div>
<div class="a" style="left:155px;top:159px;width:1px;height:12px;background:#000"></div>
<div class="a" style="left:175px;top:159px;width:1px;height:12px;background:#000"></div>
<div class="a" style="left:135px;top:159px;width:60px;height:1px;background:#000"></div>
<div class="t" style="left:57.00px;top:160.16px;font-size:8.2px;font-weight:normal;color:#000;font-family:'Liberation Sans',sans-serif;">Fig.</div>
<div class="t" style="left:93.20px;top:160.33px;font-size:8px;font-weight:normal;color:#000;font-family:'Liberation Sans',sans-serif;">Part No.</div>
<div class="t" style="left:165.00px;top:149.82px;font-size:7.3px;font-weight:normal;color:#000;font-family:'Liberation Sans',sans-serif;transform:translateX(-50%)">Quantity</div>
<div class="t" style="left:145.00px;top:162.82px;font-size:7.3px;font-weight:normal;color:#000;font-family:'Liberation Sans',sans-serif;transform:translateX(-50%)">1</div>
<div class="t" style="left:165.50px;top:162.82px;font-size:7.3px;font-weight:normal;color:#000;font-family:'Liberation Sans',sans-serif;transform:translateX(-50%)">2</div>
<div class="t" style="left:185.50px;top:162.82px;font-size:7.3px;font-weight:normal;color:#000;font-family:'Liberation Sans',sans-serif;transform:translateX(-50%)">3</div>
<div class="t" style="left:201.00px;top:152.67px;font-size:7px;font-weight:normal;color:#000;font-family:'Liberation Sans',sans-serif;transform:translateX(-50%)">P</div>
<div class="t" style="left:201.00px;top:161.47px;font-size:7px;font-weight:normal;color:#000;font-family:'Liberation Sans',sans-serif;transform:translateX(-50%)">S</div>
<div class="t" style="left:212.50px;top:148.41px;font-size:6.6px;font-weight:normal;color:#000;font-family:'Liberation Sans',sans-serif;transform:translateX(-50%)">K</div>
<div class="t" style="left:212.50px;top:155.61px;font-size:6.6px;font-weight:normal;color:#000;font-family:'Liberation Sans',sans-serif;transform:translateX(-50%)">I</div>
<div class="t" style="left:212.50px;top:163.01px;font-size:6.6px;font-weight:normal;color:#000;font-family:'Liberation Sans',sans-serif;transform:translateX(-50%)">T</div>
<div class="t" style="left:220.20px;top:160.57px;font-size:7.6px;font-weight:normal;color:#000;font-family:'Liberation Sans',sans-serif;">Description</div>
<div class="t" style="left:324.30px;top:160.57px;font-size:7.6px;font-weight:normal;color:#000;font-family:'Liberation Sans',sans-serif;">D&eacute;nomination</div>
<div class="t" style="left:428.80px;top:160.57px;font-size:7.6px;font-weight:normal;color:#000;font-family:'Liberation Sans',sans-serif;">Bezeichnung</div>
<div class="t" style="left:534.80px;top:160.57px;font-size:7.6px;font-weight:normal;color:#000;font-family:'Liberation Sans',sans-serif;">Denominaci&oacute;n</div>
<div class="t" style="left:643.00px;top:160.57px;font-size:7.6px;font-weight:normal;color:#000;font-family:'Liberation Sans',sans-serif;">Notes</div>
<div class="t" style="right:1298.50px;top:177.13px;font-size:8px;font-weight:normal;color:#000;font-family:'Liberation Sans',sans-serif;">1</div>
<div class="t" style="left:75.70px;top:177.13px;font-size:8px;font-weight:bold;color:#000;font-family:'Liberation Sans',sans-serif;">ZM</div>
<div class="t" style="left:92.20px;top:177.13px;font-size:8px;font-weight:bold;color:#000;font-family:'Liberation Sans',sans-serif;">2813635</div>
<div class="t" style="left:148.40px;top:177.13px;font-size:8px;font-weight:normal;color:#000;font-family:'Liberation Sans',sans-serif;">1</div>
<div class="t" style="left:220.2px;top:176.79px;width:105.1px;height:9px;font-size:8.4px;display:flex;overflow:hidden;color:#2a2a2a"><span>Brake cylinder, cpl.</span><span style="flex:1;margin-left:1px;background:linear-gradient(90deg,#444 0 1.2px,transparent 1.2px) 0 6.3px / 2.22px 1px repeat-x"></span></div>
<div class="t" style="left:325.5px;top:176.79px;width:104.3px;height:9px;font-size:8.4px;display:flex;overflow:hidden;color:#2a2a2a"><span>V&eacute;rin de main, cpl.</span><span style="flex:1;margin-left:1px;background:linear-gradient(90deg,#444 0 1.2px,transparent 1.2px) 0 6.3px / 2.22px 1px repeat-x"></span></div>
<div class="t" style="left:430.3px;top:176.79px;width:105.5px;height:9px;font-size:8.4px;display:flex;overflow:hidden;color:#2a2a2a"><span>Bremszylinder, kpl.</span><span style="flex:1;margin-left:1px;background:linear-gradient(90deg,#444 0 1.2px,transparent 1.2px) 0 6.3px / 2.22px 1px repeat-x"></span></div>
<div class="t" style="left:536px;top:176.79px;width:105.0px;height:9px;font-size:8.4px;display:flex;overflow:hidden;color:#2a2a2a"><span>Cilindro de freno, cpl.</span><span style="flex:1;margin-left:1px;background:linear-gradient(90deg,#444 0 1.2px,transparent 1.2px) 0 6.3px / 2.22px 1px repeat-x"></span></div>
<div class="t" style="right:1298.50px;top:188.04px;font-size:8px;font-weight:normal;color:#000;font-family:'Liberation Sans',sans-serif;">2</div>
<div class="t" style="left:75.70px;top:188.04px;font-size:8px;font-weight:bold;color:#000;font-family:'Liberation Sans',sans-serif;">ZM</div>
<div class="t" style="left:92.20px;top:188.04px;font-size:8px;font-weight:bold;color:#000;font-family:'Liberation Sans',sans-serif;">2812008</div>
<div class="t" style="left:148.40px;top:188.04px;font-size:8px;font-weight:normal;color:#000;font-family:'Liberation Sans',sans-serif;">1</div>
<div class="t" style="left:220.2px;top:187.70px;width:105.1px;height:9px;font-size:8.4px;display:flex;overflow:hidden;color:#2a2a2a"><span>&bull;Tappet</span><span style="flex:1;margin-left:1px;background:linear-gradient(90deg,#444 0 1.2px,transparent 1.2px) 0 6.3px / 2.22px 1px repeat-x"></span></div>
<div class="t" style="left:325.5px;top:187.70px;width:104.3px;height:9px;font-size:8.4px;display:flex;overflow:hidden;color:#2a2a2a"><span>&bull;Poussoir</span><span style="flex:1;margin-left:1px;background:linear-gradient(90deg,#444 0 1.2px,transparent 1.2px) 0 6.3px / 2.22px 1px repeat-x"></span></div>
<div class="t" style="left:430.3px;top:187.70px;width:105.5px;height:9px;font-size:8.4px;display:flex;overflow:hidden;color:#2a2a2a"><span>&bull;St&ouml;&szlig;el</span><span style="flex:1;margin-left:1px;background:linear-gradient(90deg,#444 0 1.2px,transparent 1.2px) 0 6.3px / 2.22px 1px repeat-x"></span></div>
<div class="t" style="left:536px;top:187.70px;width:105.0px;height:9px;font-size:8.4px;display:flex;overflow:hidden;color:#2a2a2a"><span>&bull;Empujador</span><span style="flex:1;margin-left:1px;background:linear-gradient(90deg,#444 0 1.2px,transparent 1.2px) 0 6.3px / 2.22px 1px repeat-x"></span></div>
<div class="t" style="right:1298.50px;top:198.95px;font-size:8px;font-weight:normal;color:#000;font-family:'Liberation Sans',sans-serif;">3</div>
<div class="t" style="left:75.70px;top:198.95px;font-size:8px;font-weight:bold;color:#000;font-family:'Liberation Sans',sans-serif;">VOE</div>
<div class="t" style="left:94.90px;top:198.95px;font-size:8px;font-weight:bold;color:#000;font-family:'Liberation Sans',sans-serif;">14370894</div>
<div class="t" style="left:148.40px;top:198.95px;font-size:8px;font-weight:normal;color:#000;font-family:'Liberation Sans',sans-serif;">1</div>
<div class="t" style="left:220.2px;top:198.61px;width:105.1px;height:9px;font-size:8.4px;display:flex;overflow:hidden;color:#2a2a2a"><span>Pressure switch</span><span style="flex:1;margin-left:1px;background:linear-gradient(90deg,#444 0 1.2px,transparent 1.2px) 0 6.3px / 2.22px 1px repeat-x"></span></div>
<div class="t" style="left:325.5px;top:198.61px;width:104.3px;height:9px;font-size:8.4px;display:flex;overflow:hidden;color:#2a2a2a"><span>Interrupteur de pression</span><span style="flex:1;margin-left:1px;background:linear-gradient(90deg,#444 0 1.2px,transparent 1.2px) 0 6.3px / 2.22px 1px repeat-x"></span></div>
<div class="t" style="left:430.3px;top:198.61px;width:105.5px;height:9px;font-size:8.4px;display:flex;overflow:hidden;color:#2a2a2a"><span>Druckschalter</span><span style="flex:1;margin-left:1px;background:linear-gradient(90deg,#444 0 1.2px,transparent 1.2px) 0 6.3px / 2.22px 1px repeat-x"></span></div>
<div class="t" style="left:536px;top:198.61px;width:105.0px;height:9px;font-size:8.4px;display:flex;overflow:hidden;color:#2a2a2a"><span>Interruptor pulsador</span><span style="flex:1;margin-left:1px;background:linear-gradient(90deg,#444 0 1.2px,transparent 1.2px) 0 6.3px / 2.22px 1px repeat-x"></span></div>
<div class="t" style="right:1298.50px;top:209.86px;font-size:8px;font-weight:normal;color:#000;font-family:'Liberation Sans',sans-serif;">4</div>
<div class="t" style="left:75.70px;top:209.86px;font-size:8px;font-weight:bold;color:#000;font-family:'Liberation Sans',sans-serif;">VOE</div>
<div class="t" style="left:94.90px;top:209.86px;font-size:8px;font-weight:bold;color:#000;font-family:'Liberation Sans',sans-serif;">983242</div>
<div class="t" style="left:148.40px;top:209.86px;font-size:8px;font-weight:normal;color:#000;font-family:'Liberation Sans',sans-serif;">2</div>
<div class="t" style="left:220.2px;top:209.52px;width:105.1px;height:9px;font-size:8.4px;display:flex;overflow:hidden;color:#2a2a2a"><span>Screw</span><span style="flex:1;margin-left:1px;background:linear-gradient(90deg,#444 0 1.2px,transparent 1.2px) 0 6.3px / 2.22px 1px repeat-x"></span></div>
<div class="t" style="left:325.5px;top:209.52px;width:104.3px;height:9px;font-size:8.4px;display:flex;overflow:hidden;color:#2a2a2a"><span>Vis</span><span style="flex:1;margin-left:1px;background:linear-gradient(90deg,#444 0 1.2px,transparent 1.2px) 0 6.3px / 2.22px 1px repeat-x"></span></div>
<div class="t" style="left:430.3px;top:209.52px;width:105.5px;height:9px;font-size:8.4px;display:flex;overflow:hidden;color:#2a2a2a"><span>Schraube</span><span style="flex:1;margin-left:1px;background:linear-gradient(90deg,#444 0 1.2px,transparent 1.2px) 0 6.3px / 2.22px 1px repeat-x"></span></div>
<div class="t" style="left:536px;top:209.52px;width:105.0px;height:9px;font-size:8.4px;display:flex;overflow:hidden;color:#2a2a2a"><span>Tornillo</span><span style="flex:1;margin-left:1px;background:linear-gradient(90deg,#444 0 1.2px,transparent 1.2px) 0 6.3px / 2.22px 1px repeat-x"></span></div>
<div class="t" style="right:1298.50px;top:220.77px;font-size:8px;font-weight:normal;color:#000;font-family:'Liberation Sans',sans-serif;">5</div>
<div class="t" style="left:75.70px;top:220.77px;font-size:8px;font-weight:bold;color:#000;font-family:'Liberation Sans',sans-serif;">ZM</div>
<div class="t" style="left:92.20px;top:220.77px;font-size:8px;font-weight:bold;color:#000;font-family:'Liberation Sans',sans-serif;">2812006</div>
<div class="t" style="left:148.40px;top:220.77px;font-size:8px;font-weight:normal;color:#000;font-family:'Liberation Sans',sans-serif;">1</div>
<div class="t" style="left:220.2px;top:220.43px;width:105.1px;height:9px;font-size:8.4px;display:flex;overflow:hidden;color:#2a2a2a"><span>Holder</span><span style="flex:1;margin-left:1px;background:linear-gradient(90deg,#444 0 1.2px,transparent 1.2px) 0 6.3px / 2.22px 1px repeat-x"></span></div>
<div class="t" style="left:325.5px;top:220.43px;width:104.3px;height:9px;font-size:8.4px;display:flex;overflow:hidden;color:#2a2a2a"><span>Support</span><span style="flex:1;margin-left:1px;background:linear-gradient(90deg,#444 0 1.2px,transparent 1.2px) 0 6.3px / 2.22px 1px repeat-x"></span></div>
<div class="t" style="left:430.3px;top:220.43px;width:105.5px;height:9px;font-size:8.4px;display:flex;overflow:hidden;color:#2a2a2a"><span>Halter</span><span style="flex:1;margin-left:1px;background:linear-gradient(90deg,#444 0 1.2px,transparent 1.2px) 0 6.3px / 2.22px 1px repeat-x"></span></div>
<div class="t" style="left:536px;top:220.43px;width:105.0px;height:9px;font-size:8.4px;display:flex;overflow:hidden;color:#2a2a2a"><span>Soporte</span><span style="flex:1;margin-left:1px;background:linear-gradient(90deg,#444 0 1.2px,transparent 1.2px) 0 6.3px / 2.22px 1px repeat-x"></span></div>
<div class="t" style="right:1298.50px;top:231.68px;font-size:8px;font-weight:normal;color:#000;font-family:'Liberation Sans',sans-serif;">6</div>
<div class="t" style="left:75.70px;top:231.68px;font-size:8px;font-weight:bold;color:#000;font-family:'Liberation Sans',sans-serif;">ZM</div>
<div class="t" style="left:92.20px;top:231.68px;font-size:8px;font-weight:bold;color:#000;font-family:'Liberation Sans',sans-serif;">2812007</div>
<div class="t" style="left:148.40px;top:231.68px;font-size:8px;font-weight:normal;color:#000;font-family:'Liberation Sans',sans-serif;">2</div>
<div class="t" style="left:220.2px;top:231.34px;width:105.1px;height:9px;font-size:8.4px;display:flex;overflow:hidden;color:#2a2a2a"><span>Bolt</span><span style="flex:1;margin-left:1px;background:linear-gradient(90deg,#444 0 1.2px,transparent 1.2px) 0 6.3px / 2.22px 1px repeat-x"></span></div>
<div class="t" style="left:325.5px;top:231.34px;width:104.3px;height:9px;font-size:8.4px;display:flex;overflow:hidden;color:#2a2a2a"><span>Boulon</span><span style="flex:1;margin-left:1px;background:linear-gradient(90deg,#444 0 1.2px,transparent 1.2px) 0 6.3px / 2.22px 1px repeat-x"></span></div>
<div class="t" style="left:430.3px;top:231.34px;width:105.5px;height:9px;font-size:8.4px;display:flex;overflow:hidden;color:#2a2a2a"><span>Bolzen</span><span style="flex:1;margin-left:1px;background:linear-gradient(90deg,#444 0 1.2px,transparent 1.2px) 0 6.3px / 2.22px 1px repeat-x"></span></div>
<div class="t" style="left:536px;top:231.34px;width:105.0px;height:9px;font-size:8.4px;display:flex;overflow:hidden;color:#2a2a2a"><span>Perno</span><span style="flex:1;margin-left:1px;background:linear-gradient(90deg,#444 0 1.2px,transparent 1.2px) 0 6.3px / 2.22px 1px repeat-x"></span></div>
<div class="t" style="right:1298.50px;top:242.59px;font-size:8px;font-weight:normal;color:#000;font-family:'Liberation Sans',sans-serif;">7</div>
<div class="t" style="left:75.70px;top:242.59px;font-size:8px;font-weight:bold;color:#000;font-family:'Liberation Sans',sans-serif;">VOE</div>
<div class="t" style="left:94.90px;top:242.59px;font-size:8px;font-weight:bold;color:#000;font-family:'Liberation Sans',sans-serif;">13955900</div>
<div class="t" style="left:148.40px;top:242.59px;font-size:8px;font-weight:normal;color:#000;font-family:'Liberation Sans',sans-serif;">2</div>
<div class="t" style="left:220.2px;top:242.25px;width:105.1px;height:9px;font-size:8.4px;display:flex;overflow:hidden;color:#2a2a2a"><span>Washer</span><span style="flex:1;margin-left:1px;background:linear-gradient(90deg,#444 0 1.2px,transparent 1.2px) 0 6.3px / 2.22px 1px repeat-x"></span></div>
<div class="t" style="left:325.5px;top:242.25px;width:104.3px;height:9px;font-size:8.4px;display:flex;overflow:hidden;color:#2a2a2a"><span>Rondelle</span><span style="flex:1;margin-left:1px;background:linear-gradient(90deg,#444 0 1.2px,transparent 1.2px) 0 6.3px / 2.22px 1px repeat-x"></span></div>
<div class="t" style="left:430.3px;top:242.25px;width:105.5px;height:9px;font-size:8.4px;display:flex;overflow:hidden;color:#2a2a2a"><span>Scheibe</span><span style="flex:1;margin-left:1px;background:linear-gradient(90deg,#444 0 1.2px,transparent 1.2px) 0 6.3px / 2.22px 1px repeat-x"></span></div>
<div class="t" style="left:536px;top:242.25px;width:105.0px;height:9px;font-size:8.4px;display:flex;overflow:hidden;color:#2a2a2a"><span>Arandela</span><span style="flex:1;margin-left:1px;background:linear-gradient(90deg,#444 0 1.2px,transparent 1.2px) 0 6.3px / 2.22px 1px repeat-x"></span></div>
<div class="t" style="right:1298.50px;top:253.50px;font-size:8px;font-weight:normal;color:#000;font-family:'Liberation Sans',sans-serif;">8</div>
<div class="t" style="left:75.70px;top:253.50px;font-size:8px;font-weight:bold;color:#000;font-family:'Liberation Sans',sans-serif;">VOE</div>
<div class="t" style="left:94.90px;top:253.50px;font-size:8px;font-weight:bold;color:#000;font-family:'Liberation Sans',sans-serif;">946471</div>
<div class="t" style="left:148.40px;top:253.50px;font-size:8px;font-weight:normal;color:#000;font-family:'Liberation Sans',sans-serif;">2</div>
<div class="t" style="left:220.2px;top:253.16px;width:105.1px;height:9px;font-size:8.4px;display:flex;overflow:hidden;color:#2a2a2a"><span>Flange screw</span><span style="flex:1;margin-left:1px;background:linear-gradient(90deg,#444 0 1.2px,transparent 1.2px) 0 6.3px / 2.22px 1px repeat-x"></span></div>
<div class="t" style="left:325.5px;top:253.16px;width:104.3px;height:9px;font-size:8.4px;display:flex;overflow:hidden;color:#2a2a2a"><span>Vis &agrave; bride</span><span style="flex:1;margin-left:1px;background:linear-gradient(90deg,#444 0 1.2px,transparent 1.2px) 0 6.3px / 2.22px 1px repeat-x"></span></div>
<div class="t" style="left:430.3px;top:253.16px;width:105.5px;height:9px;font-size:8.4px;display:flex;overflow:hidden;color:#2a2a2a"><span>Flanschschraube</span><span style="flex:1;margin-left:1px;background:linear-gradient(90deg,#444 0 1.2px,transparent 1.2px) 0 6.3px / 2.22px 1px repeat-x"></span></div>
<div class="t" style="left:536px;top:253.16px;width:105.0px;height:9px;font-size:8.4px;display:flex;overflow:hidden;color:#2a2a2a"><span>Torn embridado</span><span style="flex:1;margin-left:1px;background:linear-gradient(90deg,#444 0 1.2px,transparent 1.2px) 0 6.3px / 2.22px 1px repeat-x"></span></div>
<div class="t" style="right:1298.50px;top:264.41px;font-size:8px;font-weight:normal;color:#000;font-family:'Liberation Sans',sans-serif;">9</div>
<div class="t" style="left:75.70px;top:264.41px;font-size:8px;font-weight:bold;color:#000;font-family:'Liberation Sans',sans-serif;">VOE</div>
<div class="t" style="left:94.90px;top:264.41px;font-size:8px;font-weight:bold;color:#000;font-family:'Liberation Sans',sans-serif;">976945</div>
<div class="t" style="left:148.40px;top:264.41px;font-size:8px;font-weight:normal;color:#000;font-family:'Liberation Sans',sans-serif;">2</div>
<div class="t" style="left:220.2px;top:264.07px;width:105.1px;height:9px;font-size:8.4px;display:flex;overflow:hidden;color:#2a2a2a"><span>Washer</span><span style="flex:1;margin-left:1px;background:linear-gradient(90deg,#444 0 1.2px,transparent 1.2px) 0 6.3px / 2.22px 1px repeat-x"></span></div>
<div class="t" style="left:325.5px;top:264.07px;width:104.3px;height:9px;font-size:8.4px;display:flex;overflow:hidden;color:#2a2a2a"><span>Rondelle</span><span style="flex:1;margin-left:1px;background:linear-gradient(90deg,#444 0 1.2px,transparent 1.2px) 0 6.3px / 2.22px 1px repeat-x"></span></div>
<div class="t" style="left:430.3px;top:264.07px;width:105.5px;height:9px;font-size:8.4px;display:flex;overflow:hidden;color:#2a2a2a"><span>Scheibe</span><span style="flex:1;margin-left:1px;background:linear-gradient(90deg,#444 0 1.2px,transparent 1.2px) 0 6.3px / 2.22px 1px repeat-x"></span></div>
<div class="t" style="left:536px;top:264.07px;width:105.0px;height:9px;font-size:8.4px;display:flex;overflow:hidden;color:#2a2a2a"><span>Arandela</span><span style="flex:1;margin-left:1px;background:linear-gradient(90deg,#444 0 1.2px,transparent 1.2px) 0 6.3px / 2.22px 1px repeat-x"></span></div>
<div class="t" style="right:1298.50px;top:275.32px;font-size:8px;font-weight:normal;color:#000;font-family:'Liberation Sans',sans-serif;">10</div>
<div class="t" style="left:75.70px;top:275.32px;font-size:8px;font-weight:bold;color:#000;font-family:'Liberation Sans',sans-serif;">ZM</div>
<div class="t" style="left:92.20px;top:275.32px;font-size:8px;font-weight:bold;color:#000;font-family:'Liberation Sans',sans-serif;">2807631</div>
<div class="t" style="left:148.40px;top:275.32px;font-size:8px;font-weight:normal;color:#000;font-family:'Liberation Sans',sans-serif;">1</div>
<div class="t" style="left:220.2px;top:274.98px;width:105.1px;height:9px;font-size:8.4px;display:flex;overflow:hidden;color:#2a2a2a"><span>Ring fitting</span><span style="flex:1;margin-left:1px;background:linear-gradient(90deg,#444 0 1.2px,transparent 1.2px) 0 6.3px / 2.22px 1px repeat-x"></span></div>
<div class="t" style="left:325.5px;top:274.98px;width:104.3px;height:9px;font-size:8.4px;display:flex;overflow:hidden;color:#2a2a2a"><span>Support de bague</span><span style="flex:1;margin-left:1px;background:linear-gradient(90deg,#444 0 1.2px,transparent 1.2px) 0 6.3px / 2.22px 1px repeat-x"></span></div>
<div class="t" style="left:430.3px;top:274.98px;width:105.5px;height:9px;font-size:8.4px;display:flex;overflow:hidden;color:#2a2a2a"><span>Ringstutzen</span><span style="flex:1;margin-left:1px;background:linear-gradient(90deg,#444 0 1.2px,transparent 1.2px) 0 6.3px / 2.22px 1px repeat-x"></span></div>
<div class="t" style="left:536px;top:274.98px;width:105.0px;height:9px;font-size:8.4px;display:flex;overflow:hidden;color:#2a2a2a"><span>Pieza de uni&oacute;n anular</span><span style="flex:1;margin-left:1px;background:linear-gradient(90deg,#444 0 1.2px,transparent 1.2px) 0 6.3px / 2.22px 1px repeat-x"></span></div>
<div class="t" style="right:1298.50px;top:286.23px;font-size:8px;font-weight:normal;color:#000;font-family:'Liberation Sans',sans-serif;">11</div>
<div class="t" style="left:75.70px;top:286.23px;font-size:8px;font-weight:bold;color:#000;font-family:'Liberation Sans',sans-serif;">VOE</div>
<div class="t" style="left:94.90px;top:286.23px;font-size:8px;font-weight:bold;color:#000;font-family:'Liberation Sans',sans-serif;">13947282</div>
<div class="t" style="left:148.40px;top:286.23px;font-size:8px;font-weight:normal;color:#000;font-family:'Liberation Sans',sans-serif;">1</div>
<div class="t" style="left:220.2px;top:285.89px;width:105.1px;height:9px;font-size:8.4px;display:flex;overflow:hidden;color:#2a2a2a"><span>Gasket</span><span style="flex:1;margin-left:1px;background:linear-gradient(90deg,#444 0 1.2px,transparent 1.2px) 0 6.3px / 2.22px 1px repeat-x"></span></div>
<div class="t" style="left:325.5px;top:285.89px;width:104.3px;height:9px;font-size:8.4px;display:flex;overflow:hidden;color:#2a2a2a"><span>Joint</span><span style="flex:1;margin-left:1px;background:linear-gradient(90deg,#444 0 1.2px,transparent 1.2px) 0 6.3px / 2.22px 1px repeat-x"></span></div>
<div class="t" style="left:430.3px;top:285.89px;width:105.5px;height:9px;font-size:8.4px;display:flex;overflow:hidden;color:#2a2a2a"><span>Dichtung</span><span style="flex:1;margin-left:1px;background:linear-gradient(90deg,#444 0 1.2px,transparent 1.2px) 0 6.3px / 2.22px 1px repeat-x"></span></div>
<div class="t" style="left:536px;top:285.89px;width:105.0px;height:9px;font-size:8.4px;display:flex;overflow:hidden;color:#2a2a2a"><span>Junta</span><span style="flex:1;margin-left:1px;background:linear-gradient(90deg,#444 0 1.2px,transparent 1.2px) 0 6.3px / 2.22px 1px repeat-x"></span></div>
<div class="t" style="left:642.50px;top:286.06px;font-size:8.2px;font-weight:normal;color:#000;font-family:'Liberation Sans',sans-serif;">12X15,5</div>
<div class="t" style="right:1298.50px;top:297.14px;font-size:8px;font-weight:normal;color:#000;font-family:'Liberation Sans',sans-serif;">12</div>
<div class="t" style="left:75.70px;top:297.14px;font-size:8px;font-weight:bold;color:#000;font-family:'Liberation Sans',sans-serif;">ZM</div>
<div class="t" style="left:92.20px;top:297.14px;font-size:8px;font-weight:bold;color:#000;font-family:'Liberation Sans',sans-serif;">2807630</div>
<div class="t" style="left:148.40px;top:297.14px;font-size:8px;font-weight:normal;color:#000;font-family:'Liberation Sans',sans-serif;">1</div>
<div class="t" style="left:220.2px;top:296.80px;width:105.1px;height:9px;font-size:8.4px;display:flex;overflow:hidden;color:#2a2a2a"><span>Hollow screw</span><span style="flex:1;margin-left:1px;background:linear-gradient(90deg,#444 0 1.2px,transparent 1.2px) 0 6.3px / 2.22px 1px repeat-x"></span></div>
<div class="t" style="left:325.5px;top:296.80px;width:104.3px;height:9px;font-size:8.4px;display:flex;overflow:hidden;color:#2a2a2a"><span>Vis creuse</span><span style="flex:1;margin-left:1px;background:linear-gradient(90deg,#444 0 1.2px,transparent 1.2px) 0 6.3px / 2.22px 1px repeat-x"></span></div>
<div class="t" style="left:430.3px;top:296.80px;width:105.5px;height:9px;font-size:8.4px;display:flex;overflow:hidden;color:#2a2a2a"><span>Hohlschraube</span><span style="flex:1;margin-left:1px;background:linear-gradient(90deg,#444 0 1.2px,transparent 1.2px) 0 6.3px / 2.22px 1px repeat-x"></span></div>
<div class="t" style="left:536px;top:296.80px;width:105.0px;height:9px;font-size:8.4px;display:flex;overflow:hidden;color:#2a2a2a"><span>Racor-surtidor</span><span style="flex:1;margin-left:1px;background:linear-gradient(90deg,#444 0 1.2px,transparent 1.2px) 0 6.3px / 2.22px 1px repeat-x"></span></div>
<div class="t" style="right:1298.50px;top:308.05px;font-size:8px;font-weight:normal;color:#000;font-family:'Liberation Sans',sans-serif;">13</div>
<div class="t" style="left:75.70px;top:308.05px;font-size:8px;font-weight:bold;color:#000;font-family:'Liberation Sans',sans-serif;">VOE</div>
<div class="t" style="left:94.90px;top:308.05px;font-size:8px;font-weight:bold;color:#000;font-family:'Liberation Sans',sans-serif;">13947621</div>
<div class="t" style="left:148.40px;top:308.05px;font-size:8px;font-weight:normal;color:#000;font-family:'Liberation Sans',sans-serif;">1</div>
<div class="t" style="left:220.2px;top:307.71px;width:105.1px;height:9px;font-size:8.4px;display:flex;overflow:hidden;color:#2a2a2a"><span>Plane Gasket</span><span style="flex:1;margin-left:1px;background:linear-gradient(90deg,#444 0 1.2px,transparent 1.2px) 0 6.3px / 2.22px 1px repeat-x"></span></div>
<div class="t" style="left:325.5px;top:307.71px;width:104.3px;height:9px;font-size:8.4px;display:flex;overflow:hidden;color:#2a2a2a"><span>Joint Plan</span><span style="flex:1;margin-left:1px;background:linear-gradient(90deg,#444 0 1.2px,transparent 1.2px) 0 6.3px / 2.22px 1px repeat-x"></span></div>
<div class="t" style="left:430.3px;top:307.71px;width:105.5px;height:9px;font-size:8.4px;display:flex;overflow:hidden;color:#2a2a2a"><span>Flachdichtung</span><span style="flex:1;margin-left:1px;background:linear-gradient(90deg,#444 0 1.2px,transparent 1.2px) 0 6.3px / 2.22px 1px repeat-x"></span></div>
<div class="t" style="left:536px;top:307.71px;width:105.0px;height:9px;font-size:8.4px;display:flex;overflow:hidden;color:#2a2a2a"><span>Junta Plana</span><span style="flex:1;margin-left:1px;background:linear-gradient(90deg,#444 0 1.2px,transparent 1.2px) 0 6.3px / 2.22px 1px repeat-x"></span></div>
<div class="t" style="left:642.50px;top:307.88px;font-size:8.2px;font-weight:normal;color:#000;font-family:'Liberation Sans',sans-serif;">14X18</div>
<div class="a" style="left:52px;top:508px;width:707px;height:2px;background:#000"></div>
<div class="a" style="left:52px;top:590px;width:707px;height:2px;background:#000"></div>
<div class="a" style="left:52px;top:508px;width:2px;height:84px;background:#000"></div>
<div class="a" style="left:757px;top:508px;width:2px;height:84px;background:#000"></div>
<div class="a" style="left:74px;top:510px;width:1px;height:80px;background:#000"></div>
<div class="a" style="left:255px;top:510px;width:2px;height:80px;background:#000"></div>
<div class="a" style="left:54px;top:524px;width:201px;height:1px;background:#000"></div>
<div class="a" style="left:54px;top:541px;width:201px;height:1px;background:#000"></div>
<div class="a" style="left:54px;top:558px;width:201px;height:1px;background:#000"></div>
<div class="a" style="left:54px;top:574px;width:201px;height:1px;background:#000"></div>
<div class="a" style="left:257px;top:574px;width:375px;height:1px;background:#000"></div>
<div class="a" style="left:631px;top:510px;width:1px;height:80px;background:#000"></div>
<div class="a" style="left:709px;top:510px;width:1px;height:80px;background:#000"></div>
<div class="a" style="left:632px;top:536px;width:125px;height:1px;background:#000"></div>
<div class="a" style="left:632px;top:563px;width:125px;height:1px;background:#000"></div>
<div class="t" style="left:59.40px;top:513.80px;font-size:8.5px;font-weight:bold;color:#000;font-family:'Liberation Sans',sans-serif;">1</div>
<div class="t" style="left:59.40px;top:530.80px;font-size:8.5px;font-weight:bold;color:#000;font-family:'Liberation Sans',sans-serif;">2</div>
<div class="t" style="left:59.40px;top:547.80px;font-size:8.5px;font-weight:bold;color:#000;font-family:'Liberation Sans',sans-serif;">3</div>
<div class="t" style="left:59.40px;top:564.80px;font-size:8.5px;font-weight:bold;color:#000;font-family:'Liberation Sans',sans-serif;">4</div>
<div class="t" style="left:59.40px;top:580.80px;font-size:8.5px;font-weight:bold;color:#000;font-family:'Liberation Sans',sans-serif;">5</div>
<div class="t" style="left:261.40px;top:524.18px;font-size:9px;font-weight:bold;color:#000;font-family:'Liberation Sans',sans-serif;">Cilindro de freno</div>
<div class="t" style="left:261.40px;top:536.98px;font-size:9px;font-weight:bold;color:#000;font-family:'Liberation Sans',sans-serif;">Bremszylinder</div>
<div class="t" style="left:261.40px;top:549.68px;font-size:9px;font-weight:bold;color:#000;font-family:'Liberation Sans',sans-serif;">Cylindre de frein</div>
<div class="t" style="left:261.40px;top:562.38px;font-size:9px;font-weight:bold;color:#000;font-family:'Liberation Sans',sans-serif;">Brake cylinder</div>
<div class="t" style="left:636.00px;top:511.42px;font-size:8.6px;font-weight:normal;color:#000;font-family:'Liberation Sans',sans-serif;">Catalogue id</div>
<div class="t" style="right:659.50px;top:522.06px;font-size:11.5px;font-weight:bold;color:#000;font-family:'Liberation Sans',sans-serif;">20038</div>
<div class="t" style="left:714.00px;top:511.42px;font-size:8.6px;font-weight:normal;color:#000;font-family:'Liberation Sans',sans-serif;">Group</div>
<div class="t" style="right:612.70px;top:522.06px;font-size:11.5px;font-weight:bold;color:#000;font-family:'Liberation Sans',sans-serif;">521</div>
<div class="t" style="left:636.00px;top:539.22px;font-size:8.6px;font-weight:normal;color:#000;font-family:'Liberation Sans',sans-serif;">Illustr. No</div>
<div class="t" style="right:659.50px;top:549.86px;font-size:11.5px;font-weight:bold;color:#000;font-family:'Liberation Sans',sans-serif;">1008578</div>
<div class="t" style="left:714.00px;top:539.22px;font-size:8.6px;font-weight:normal;color:#000;font-family:'Liberation Sans',sans-serif;">Section</div>
<div class="t" style="right:612.70px;top:549.86px;font-size:11.5px;font-weight:bold;color:#000;font-family:'Liberation Sans',sans-serif;">100</div>
<div class="t" style="left:636.00px;top:567.72px;font-size:8.6px;font-weight:normal;color:#000;font-family:'Liberation Sans',sans-serif;">Issue</div>
<div class="t" style="right:659.50px;top:579.08px;font-size:9px;font-weight:bold;color:#000;font-family:'Liberation Sans',sans-serif;">VOE 64D9920038</div>
<div class="t" style="left:714.00px;top:567.72px;font-size:8.6px;font-weight:normal;color:#000;font-family:'Liberation Sans',sans-serif;">Page</div>
<div class="t" style="right:612.70px;top:577.26px;font-size:11.5px;font-weight:bold;color:#000;font-family:'Liberation Sans',sans-serif;">225</div>
<svg class="a" style="left:65.7px;top:602px" width="104" height="14" viewBox="0 0 104 14"><path fill="#000" fill-rule="evenodd" d="M0 0H11V1.3H9.2L14.8 10.8L19.3 1.3H17.4V0H25.1V1.3H23.4L16.6 14H11.6L3.2 1.3H0Z M24.8 7A9.65 7 0 1 0 44.1 7A9.65 7 0 1 0 24.8 7Z M30.8 7A3.7 5.05 0 1 1 38.2 7A3.7 5.05 0 1 1 30.8 7Z M45.3 0H55.3V1.3H53.6V12.5H60.4L61.3 9.6H62.9V14H45.3V12.7H47V1.3H45.3Z M62 0H73V1.3H71.2L76.8 10.8L81.3 1.3H79.4V0H85.3V1.3H83.8L77.8 14H72.8L64.6 1.3H62Z M84.4 7A9.7 7 0 1 0 103.8 7A9.7 7 0 1 0 84.4 7Z M90.4 7A3.7 5.05 0 1 1 97.8 7A3.7 5.05 0 1 1 90.4 7Z"/></svg>
<svg class="a" style="left:734.5px;top:602px" width="22" height="14" viewBox="0 0 22 14"><g fill="none" stroke="#000" stroke-width="2.3" stroke-linejoin="round"><path d="M1.2 0.3V13H4.8"/><path d="M6.2 2.8C6.2 0.3 10 0.1 10 2.8C10 5.5 6.8 10.5 6.2 13H10.4"/><path d="M15.6 1.1H12.2V6C14.5 5.8 15.4 6.5 15.4 9V11C15.4 12.8 14 13 11.5 13"/><path d="M18.3 0.3V13H19.8C21 13 21.4 12.5 21.4 11.2V8.3C21.4 7 20.6 6.6 18.5 6.6H19.6C20.8 6.6 21.1 6 21.1 4.8V2.3C21.1 1.3 20.6 1.1 19.5 1.1H18.3"/></g></svg>
<div class="a" style="left:331px;top:623px;width:74px;height:39px;background:#808080;border:1px solid #e0e0e0"></div>
<svg class="a" style="left:790px;top:133px;overflow:hidden" width="559" height="529" viewBox="790 133 559 529"><path d="M1005.2 348 C1002 330 997 306 1005 292 C1012 282 1030 282 1050 287 C1075 294 1095 308 1115 325 C1135 340 1150 345 1177 348" fill="none" stroke="#000" stroke-width="1.1" /><path d="M1011 348 C1008 330 1003 308 1010 297 C1016 289 1030 289 1048 293 C1072 299 1090 313 1110 330 C1132 346 1150 351 1177 354" fill="none" stroke="#000" stroke-width="1.1" /><path d="M1002.5 348.5L1010.5 347.8L1013.5 359.2L1005 360Z" fill="#fff" stroke="#000" stroke-width="0.9"/><path d="M1004.5 359.5L1013.5 358.5L1015.5 368C1015.5 370 1013 370.5 1010 370.8C1007 371 1005.5 370.5 1005.3 368.5Z" fill="#fff" stroke="#000" stroke-width="0.9"/><path d="M1005 364L1014.5 363M1009 359V370.5" fill="none" stroke="#000" stroke-width="0.6" /><path d="M1176.5 347.5H1187V356.5H1176.5Z" fill="#fff" stroke="#000" stroke-width="0.9"/><path d="M1180 347.5V356.5" fill="none" stroke="#000" stroke-width="0.6" /><path d="M1187 349.5H1196L1199.5 352.5L1196 355.5H1187Z" fill="#fff" stroke="#000" stroke-width="0.9"/><path d="M1190 349.5V355.5M1193 349.5V355.5" fill="none" stroke="#000" stroke-width="0.6" /><path d="M1009.5 377L1011 374.5H1015.5L1017.5 377L1018.5 385L1016 387H1012L1010 385Z" fill="#fff" stroke="#000" stroke-width="0.9"/><path d="M1010 380H1018M1010.5 383H1018.5M1013.5 375V386" fill="none" stroke="#000" stroke-width="0.55" /><path d="M1014.5 387C1015 393 1016 399 1018.5 401.5C1021 403.5 1025 402 1030.5 397" fill="none" stroke="#000" stroke-width="3.8" /><path d="M1014.5 387C1015 393 1016 399 1018.5 401.5C1021 403.5 1025 402 1030.5 397" fill="none" stroke="#fff" stroke-width="2.2" /><path d="M1028.7 394L1039 388L1042.6 392L1041.5 395.5L1032 400.5C1030 400.5 1028.5 397 1028.7 394Z" fill="#fff" stroke="#000" stroke-width="0.9"/><path d="M1032.5 392L1035.5 398M1036 390L1039 396" fill="none" stroke="#000" stroke-width="0.6" /><path d="M1045 389L1050 386.5L1050.5 398" fill="none" stroke="#666" stroke-width="0.6" /><path d="M1050 400V450" fill="none" stroke="#555" stroke-width="0.6" stroke-dasharray="7 2 1 2"/><text x="975" y="343.3" font-family="Liberation Sans" font-size="8" fill="#000">13</text><path d="M986 340.4H1000.4" fill="none" stroke="#000" stroke-width="0.7" /><text x="982.7" y="388.5" font-family="Liberation Sans" font-size="8" fill="#000">14</text><path d="M993 385.6H1008" fill="none" stroke="#000" stroke-width="0.7" /><text x="1233.8" y="255.2" font-family="Liberation Sans" font-size="8" fill="#000">10</text><path d="M1245.9 257L1253.6 265.7" fill="none" stroke="#000" stroke-width="0.7" /><text x="1271.8" y="253.7" font-family="Liberation Sans" font-size="8" fill="#000">11</text><path d="M1280.6 255.9L1290.9 263.6" fill="none" stroke="#000" stroke-width="0.7" /><text x="1221.3" y="278.5" font-family="Liberation Sans" font-size="8" fill="#000">12</text><path d="M1230 281L1238.9 289.5" fill="none" stroke="#000" stroke-width="0.7" /><text x="1271" y="314" font-family="Liberation Sans" font-size="8" fill="#000">5</text><path d="M1281 311.9H1286.5" fill="none" stroke="#888" stroke-width="0.7" /><text x="1271" y="331" font-family="Liberation Sans" font-size="8" fill="#000">7</text><path d="M1278.8 328.3H1285.4" fill="none" stroke="#000" stroke-width="0.7" /><text x="1271" y="344.2" font-family="Liberation Sans" font-size="8" fill="#000">8</text><path d="M1278.8 341.5L1288.7 343.7" fill="none" stroke="#000" stroke-width="0.7" /><text x="1271" y="360.2" font-family="Liberation Sans" font-size="8" fill="#000">9</text><path d="M1278.8 358.5L1287.5 363" fill="none" stroke="#000" stroke-width="0.7" /><rect x="1078.5" y="363.5" width="37.5" height="13.5" rx="6.75" fill="#fff" stroke="#000" stroke-width="0.8"/><text x="1097.2" y="374.3" text-anchor="middle" font-family="Liberation Sans" font-weight="bold" font-size="10.5" fill="#000">511</text><path d="M1090.8 377.5L1077.3 407.7" fill="none" stroke="#000" stroke-width="0.7" /><circle cx="1077.3" cy="407.7" r="1.3" fill="#000" stroke="#000" stroke-width="0"/><rect x="1162" y="375.2" width="37.5" height="13.5" rx="6.75" fill="#fff" stroke="#000" stroke-width="0.8"/><text x="1181" y="386" text-anchor="middle" font-family="Liberation Sans" font-weight="bold" font-size="10.5" fill="#000">521</text><path d="M1199 381.5L1238 363.7" fill="none" stroke="#000" stroke-width="0.7" /><circle cx="1238" cy="363.7" r="1.3" fill="#000" stroke="#000" stroke-width="0"/><path d="M1199 383.5L1252.9 394.4" fill="none" stroke="#000" stroke-width="0.7" /><circle cx="1252.9" cy="394.4" r="1.3" fill="#000" stroke="#000" stroke-width="0"/><text x="846" y="567.4" text-anchor="middle" font-family="Liberation Sans" font-size="4.6" fill="#000">Volvo Construction</text><text x="846.5" y="571.5" text-anchor="middle" font-family="Liberation Sans" font-size="4.6" fill="#000">Equipment</text><text x="846.4" y="580.8" text-anchor="middle" font-family="Liberation Sans" font-weight="bold" font-size="7" fill="#000">1002899</text><ellipse cx="1243.7" cy="294.9" rx="4.6" ry="4.6" transform="rotate(0 1243.7 294.9)" fill="#fff" stroke="#000" stroke-width="1.5"/><path d="M1241.5 292.5L1246 292.8L1246.5 297L1242 297.3Z" fill="none" stroke="#000" stroke-width="0.8"/><path d="M1252.4 267.7V279L1257.3 283.5L1266 287.5C1270 289 1274 287 1274.7 283C1275 279 1272 275 1268 273.7L1266 272L1252.4 267.7Z" fill="#fff" stroke="#000" stroke-width="1.1"/><ellipse cx="1261.1" cy="267.7" rx="8.7" ry="5.3" transform="rotate(8 1261.1 267.7)" fill="#fff" stroke="#000" stroke-width="1.1"/><ellipse cx="1261.1" cy="267.7" rx="4.5" ry="2.8" transform="rotate(8 1261.1 267.7)" fill="none" stroke="#000" stroke-width="0.9"/><path d="M1252.4 274.5L1263 279.5M1253 279L1262.5 283.5" fill="none" stroke="#000" stroke-width="0.8" /><path d="M1263.4 273.7C1268 274 1272 277 1272.5 281M1265 272.5C1270 273 1274 276 1274.5 280" fill="none" stroke="#000" stroke-width="0.7" /><ellipse cx="1267.2" cy="282" rx="1.6" ry="1.4" transform="rotate(0 1267.2 282)" fill="none" stroke="#000" stroke-width="1.2"/><path d="M1252 290.4L1266.4 282.8" fill="none" stroke="#000" stroke-width="0.7" stroke-dasharray="3.5 2"/><path d="M1274.7 277.5L1286 270.7" fill="none" stroke="#000" stroke-width="0.7" /><path d="M1285.5 268.5L1292.5 264.5L1294.5 268L1287.5 272Z" fill="#fff" stroke="#000" stroke-width="0.9"/><path d="M1287.5 267.5L1289 271M1289.5 266.5L1291 270M1291.5 265.3L1293 268.8" fill="none" stroke="#000" stroke-width="0.6" /><ellipse cx="1297.4" cy="264.7" rx="5.3" ry="5.5" transform="rotate(0 1297.4 264.7)" fill="#fff" stroke="#000" stroke-width="1.2"/><ellipse cx="1296" cy="265.5" rx="3.2" ry="4" transform="rotate(0 1296 265.5)" fill="none" stroke="#000" stroke-width="0.8"/><path d="M1289.3 320.7V300C1289.5 285 1310 273 1349 270" fill="none" stroke="#000" stroke-width="1.3" /><path d="M1296 320.7V301C1296.5 290 1314 280 1349 276.5" fill="none" stroke="#000" stroke-width="1.3" /><path d="M1289.3 320.7H1296" fill="none" stroke="#000" stroke-width="0.8" /><ellipse cx="1292" cy="329" rx="4.5" ry="2.8" transform="rotate(0 1292 329)" fill="#fff" stroke="#000" stroke-width="1"/><ellipse cx="1292" cy="328.5" rx="2.2" ry="1.2" transform="rotate(0 1292 328.5)" fill="none" stroke="#000" stroke-width="0.6"/><circle cx="1291.6" cy="337.5" r="2.2" fill="#fff" stroke="#000" stroke-width="0.9"/><path d="M1290 339.5H1293.5V345L1295.5 348V352H1294V356H1289.5V352H1288V348L1290 345Z" fill="#fff" stroke="#000" stroke-width="1"/><ellipse cx="1292" cy="363.5" rx="4" ry="3" transform="rotate(0 1292 363.5)" fill="#fff" stroke="#000" stroke-width="1.8"/><path d="M1187.5 331.5C1186 328 1189 325 1193 326L1197.5 331C1197 334 1195 336 1192 336Z" fill="#fff" stroke="#000" stroke-width="1"/><path d="M1196 334L1204 340M1193 336.5L1201.5 343" fill="none" stroke="#000" stroke-width="0.8" /><path d="M1199 336L1197.5 339M1201.5 338L1200 341" fill="none" stroke="#000" stroke-width="0.6" /><ellipse cx="1213.5" cy="344.8" rx="4.8" ry="4.2" transform="rotate(20 1213.5 344.8)" fill="#fff" stroke="#000" stroke-width="1"/><ellipse cx="1213.5" cy="344.8" rx="2.2" ry="1.8" transform="rotate(20 1213.5 344.8)" fill="none" stroke="#000" stroke-width="0.7"/><path d="M1225 353C1224 349 1228 344 1232 345L1240 350C1243 354 1241 359 1237 360L1230 359Z" fill="#fff" stroke="#000" stroke-width="1"/><ellipse cx="1234" cy="355" rx="3.5" ry="2.8" transform="rotate(20 1234 355)" fill="none" stroke="#000" stroke-width="0.8"/><path d="M1230 346L1233 342L1238 344L1236 349" fill="none" stroke="#000" stroke-width="0.8" /><ellipse cx="1255.8" cy="364.6" rx="4.8" ry="4.2" transform="rotate(20 1255.8 364.6)" fill="#fff" stroke="#000" stroke-width="1"/><ellipse cx="1255.8" cy="364.6" rx="2.2" ry="1.8" transform="rotate(20 1255.8 364.6)" fill="none" stroke="#000" stroke-width="0.7"/><ellipse cx="1278.8" cy="377.8" rx="4.8" ry="4.2" transform="rotate(20 1278.8 377.8)" fill="#fff" stroke="#000" stroke-width="1"/><ellipse cx="1278.8" cy="377.8" rx="2.2" ry="1.8" transform="rotate(20 1278.8 377.8)" fill="none" stroke="#000" stroke-width="0.7"/><path d="M1199.5 352.5L1225 355" fill="none" stroke="#000" stroke-width="0.6" stroke-dasharray="3 2"/><path d="M1240 357L1250 362M1262 368L1274 375" fill="none" stroke="#000" stroke-width="0.6" stroke-dasharray="3 2"/><g transform="translate(1175 451) rotate(-30.2)"><rect x="-68" y="-7" width="20" height="14" fill="#fff" stroke="#000" stroke-width="0.85"/><path d="M-68 -2H-56M-68 2H-56M-56 -6V6" fill="none" stroke="#000" stroke-width="0.6"/><circle cx="-63" cy="-2.5" r="1.6" fill="none" stroke="#000" stroke-width="0.6"/><circle cx="-63" cy="2.5" r="1.6" fill="none" stroke="#000" stroke-width="0.6"/><path d="M-48 -1.5H-43M-48 1.5H-43" stroke="#000" stroke-width="0.8"/><rect x="-43" y="-5.5" width="7" height="11" fill="#fff" stroke="#000" stroke-width="0.85"/><path d="M-39 -4.5V4.5" stroke="#000" stroke-width="0.6"/><path d="M-36 -1.6H-20M-36 1.6H-20" stroke="#000" stroke-width="0.8"/><path d="M-20 -6.5H-13L-12 -4V4L-13 6.5H-20Z" fill="#fff" stroke="#000" stroke-width="0.85"/><path d="M-17 -5V5" stroke="#000" stroke-width="0.6"/><path d="M-12 -1.5H-3M-12 1.5H-3" stroke="#000" stroke-width="0.8"/><path d="M0 -8H29V8H0A3.5 8 0 0 1 0 -8Z" fill="#fff" stroke="#000" stroke-width="0.85"/><path d="M0 -8A3.5 8 0 0 1 0 8" fill="none" stroke="#000" stroke-width="0.7"/><path d="M29 -11.5H61A5 11.5 0 0 1 61 11.5H29A5 11.5 0 0 1 29 -11.5Z" fill="#fff" stroke="#000" stroke-width="0.85"/><path d="M29 -11.5A5 11.5 0 0 1 29 11.5" fill="none" stroke="#000" stroke-width="0.75"/><path d="M56 -11.5A5 11.5 0 0 1 56 11.5" fill="none" stroke="#000" stroke-width="0.6"/><rect x="20" y="6.5" width="13" height="7" rx="3.2" fill="#fff" stroke="#000" stroke-width="0.85"/><circle cx="24" cy="10" r="1.6" fill="none" stroke="#000" stroke-width="0.6"/><circle cx="29" cy="10" r="1.6" fill="none" stroke="#000" stroke-width="0.6"/><rect x="58" y="6" width="9" height="9" rx="4" fill="#fff" stroke="#000" stroke-width="0.85"/><circle cx="62.5" cy="10.5" r="1.8" fill="none" stroke="#000" stroke-width="0.6"/><path d="M65 -1.3H84M65 1.3H84" stroke="#000" stroke-width="0.8"/></g><path d="M1259.6 391.5L1292 376.5C1297 374.5 1301 376 1302.3 380C1303 384 1302 388 1299 391.5L1273 407L1262 400Z" fill="#fff" stroke="#000" stroke-width="0.85"/><path d="M1265 389C1269 394 1271 400 1270 405" fill="none" stroke="#000" stroke-width="0.7" /><ellipse cx="1291" cy="376.5" rx="3.2" ry="2" transform="rotate(-20 1291 376.5)" fill="#fff" stroke="#000" stroke-width="0.8"/><ellipse cx="1291" cy="376" rx="1.5" ry="1" transform="rotate(-20 1291 376)" fill="none" stroke="#000" stroke-width="0.6"/><circle cx="1296" cy="372.5" r="1.8" fill="#fff" stroke="#000" stroke-width="0.7"/><path d="M1253.8 391.5L1265.4 388.7L1276 405L1267.3 410.8L1258 405Z" fill="#fff" stroke="#000" stroke-width="0.85"/><circle cx="1270.5" cy="405" r="1.3" fill="none" stroke="#000" stroke-width="0.6"/><ellipse cx="1255" cy="405.5" rx="5.5" ry="6.5" transform="rotate(25 1255 405.5)" fill="#fff" stroke="#000" stroke-width="0.85"/><ellipse cx="1255" cy="405.5" rx="3" ry="3.8" transform="rotate(25 1255 405.5)" fill="none" stroke="#000" stroke-width="0.7"/><ellipse cx="1255" cy="405.5" rx="1.5" ry="1.8" transform="rotate(25 1255 405.5)" fill="none" stroke="#000" stroke-width="0.6"/><path d="M1026.8 412.7C1032 406 1040 402 1045.4 402.4C1050 400 1056 399 1061.9 399.3C1068 400 1074 403 1078.4 406.5C1083 411 1087 417 1088.7 423C1091 429 1092 434 1091.8 439.5C1091 446 1089 451 1086.6 455.9C1083 461 1079 465 1074.2 468.3C1069 470.5 1063 471.5 1057.8 471.4L1030 470L1020 430Z" fill="#fff" stroke="#000" stroke-width="0.85"/><path d="M1051.6 409.6C1058 413 1063 418 1066 423C1070 429 1072 435 1072.2 441.5C1072 448 1070.5 454 1068 460C1065 464 1061 467.5 1057.8 469.3" fill="none" stroke="#000" stroke-width="0.75" /><path d="M1045.4 418.8C1051 422 1055 426 1057.8 431.2C1060.5 436 1062 442 1061.9 447.7C1061.5 453 1060 459 1057.8 464.2" fill="none" stroke="#000" stroke-width="0.7" /><path d="M1026.8 412.7V416.5L1030 420" fill="none" stroke="#000" stroke-width="0.7" /><circle cx="1060.2" cy="427.1" r="1.9" fill="none" stroke="#000" stroke-width="0.75"/><path d="M1049.5 434.3L1058.5 428.2" fill="none" stroke="#000" stroke-width="0.6" /><path d="M1049.5 390V433" fill="none" stroke="#777" stroke-width="0.6" stroke-dasharray="6 2 1 2"/><path d="M1045.4 478.6L1066 484.8L1082.5 481.7L1136 508.5C1139 510.5 1139 513.5 1136 515.5L1108 535L1100 540.4L1033 511.6Z" fill="#fff" stroke="#000" stroke-width="0.8"/><path d="M1047.5 495.1L1078.5 481.5C1081 480.3 1083.5 480.3 1086 481.5L1136 508.5C1139 510.5 1139 513.5 1136 515.5L1110 531C1107 533 1103 533 1100 531L1045.4 507.5Z" fill="#fff" stroke="#000" stroke-width="0.85"/><path d="M1042.3 495.1V507L1045.4 507.5" fill="none" stroke="#000" stroke-width="0.7" /><path d="M1033 511.6L1098 541M1037 517.8L1096 549" fill="none" stroke="#000" stroke-width="0.75" /><ellipse cx="1098.5" cy="496.3" rx="2.3" ry="1.5" transform="rotate(0 1098.5 496.3)" fill="none" stroke="#000" stroke-width="0.7"/><ellipse cx="1108" cy="501" rx="4" ry="3" transform="rotate(0 1108 501)" fill="none" stroke="#000" stroke-width="0.7"/><ellipse cx="1116" cy="506" rx="2.3" ry="1.5" transform="rotate(0 1116 506)" fill="none" stroke="#000" stroke-width="0.7"/><ellipse cx="1073.8" cy="510.7" rx="2.3" ry="1.5" transform="rotate(0 1073.8 510.7)" fill="none" stroke="#000" stroke-width="0.7"/><ellipse cx="1082.7" cy="517.6" rx="4" ry="3" transform="rotate(0 1082.7 517.6)" fill="none" stroke="#000" stroke-width="0.7"/><ellipse cx="1091.6" cy="521" rx="2.3" ry="1.5" transform="rotate(0 1091.6 521)" fill="none" stroke="#000" stroke-width="0.7"/><ellipse cx="1098.2" cy="551.7" rx="3.2" ry="2.72" transform="rotate(30 1098.2 551.7)" fill="#fff" stroke="#000" stroke-width="0.8"/><ellipse cx="1098.2" cy="551.7" rx="1.4400000000000002" ry="1.2800000000000002" transform="rotate(30 1098.2 551.7)" fill="none" stroke="#000" stroke-width="0.6"/><path d="M1128.5 516.7C1120 518 1110 528 1106.3 538.9C1103 548 1104 556 1108.7 561C1112 564 1116 565.5 1119.2 565.7L1145 560L1142.5 522.5C1140 518 1136 516.5 1128.5 516.7Z" fill="#fff" stroke="#000" stroke-width="0.85"/><path d="M1130 520C1122 522 1114 530 1110 540C1107 549 1108 556 1112 560" fill="none" stroke="#000" stroke-width="0.7" /><ellipse cx="1146" cy="554" rx="25.5" ry="31" transform="rotate(22 1146 554)" fill="#fff" stroke="#000" stroke-width="0.9"/><ellipse cx="1147" cy="554" rx="21.5" ry="27" transform="rotate(22 1147 554)" fill="none" stroke="#000" stroke-width="0.7"/><ellipse cx="1155.4" cy="559.9" rx="14.5" ry="19" transform="rotate(22 1155.4 559.9)" fill="#fff" stroke="#000" stroke-width="0.85"/><ellipse cx="1156.5" cy="559" rx="11.5" ry="16" transform="rotate(22 1156.5 559)" fill="none" stroke="#000" stroke-width="0.6"/><path d="M1141.9 536.3L1146.9 540.3L1148.4 538.8L1143.4 534.8Z" fill="#fff" stroke="#000" stroke-width="0.8"/><ellipse cx="1147.7" cy="539.5999999999999" rx="1.8" ry="2.3" transform="rotate(40 1147.7 539.5999999999999)" fill="#fff" stroke="#000" stroke-width="0.8"/><path d="M1160.5 530.4L1165.5 534.4L1167.0 532.9L1162.0 528.9Z" fill="#fff" stroke="#000" stroke-width="0.8"/><ellipse cx="1166.3" cy="533.6999999999999" rx="1.8" ry="2.3" transform="rotate(40 1166.3 533.6999999999999)" fill="#fff" stroke="#000" stroke-width="0.8"/><path d="M1129 557.3L1134 561.3L1135.5 559.8L1130.5 555.8Z" fill="#fff" stroke="#000" stroke-width="0.8"/><ellipse cx="1134.8" cy="560.5999999999999" rx="1.8" ry="2.3" transform="rotate(40 1134.8 560.5999999999999)" fill="#fff" stroke="#000" stroke-width="0.8"/><path d="M1133.7 575.4L1138.7 579.4L1140.2 577.9L1135.2 573.9Z" fill="#fff" stroke="#000" stroke-width="0.8"/><ellipse cx="1139.5" cy="578.6999999999999" rx="1.8" ry="2.3" transform="rotate(40 1139.5 578.6999999999999)" fill="#fff" stroke="#000" stroke-width="0.8"/><path d="M1157 572.5L1162 576.5L1163.5 575.0L1158.5 571.0Z" fill="#fff" stroke="#000" stroke-width="0.8"/><ellipse cx="1162.8" cy="575.8" rx="1.8" ry="2.3" transform="rotate(40 1162.8 575.8)" fill="#fff" stroke="#000" stroke-width="0.8"/><path d="M867.8 406L945 413.6L969.5 426.7L962.6 462L944.7 465L869.2 423Z" fill="#fff" stroke="#000" stroke-width="0.8"/><path d="M869.2 414.3L944.7 458.3" fill="none" stroke="#000" stroke-width="0.8" /><path d="M877.5 425.3L943.4 463.8" fill="none" stroke="#000" stroke-width="0.8" /><path d="M944.7 413.6L969.5 426.7M931 424L962.6 440.4" fill="none" stroke="#000" stroke-width="0.75" /><ellipse cx="874" cy="422.6" rx="3.4" ry="2.8899999999999997" transform="rotate(30 874 422.6)" fill="#fff" stroke="#000" stroke-width="0.8"/><ellipse cx="874" cy="422.6" rx="1.53" ry="1.36" transform="rotate(30 874 422.6)" fill="none" stroke="#000" stroke-width="0.6"/><ellipse cx="945.4" cy="463.8" rx="3.4" ry="2.8899999999999997" transform="rotate(30 945.4 463.8)" fill="#fff" stroke="#000" stroke-width="0.8"/><ellipse cx="945.4" cy="463.8" rx="1.53" ry="1.36" transform="rotate(30 945.4 463.8)" fill="none" stroke="#000" stroke-width="0.6"/><path d="M941.5 432L963 421L967 428L946 439Z" fill="#fff" stroke="#000" stroke-width="0.8"/><path d="M945 436L965.5 425" fill="none" stroke="#000" stroke-width="0.9" /><ellipse cx="944.5" cy="436" rx="2.6" ry="2.2" transform="rotate(20 944.5 436)" fill="#fff" stroke="#000" stroke-width="0.7"/><path d="M845.3 357.1C838 360 831 370 828.2 380.2C826 390 827 400 831 406.5C835 412 843 415 850.8 415.3L870 412L879.3 371.4C875 363 866 357 858.5 356C852 355.6 848 356 845.3 357.1Z" fill="#fff" stroke="#000" stroke-width="0.85"/><path d="M848 360C840 366 834 376 832.5 388C831.5 398 834 405 840 410" fill="none" stroke="#000" stroke-width="0.7" /><path d="M853 360C845 366 839 378 837.5 390C837 400 839 407 845 411" fill="none" stroke="#000" stroke-width="0.7" /><path d="M842 382.4C843 370 852 363 864 362L879 368L888 374L865 418L853 412C845 405 842 395 842 382.4Z" fill="#fff" stroke="#000" stroke-width="0.8"/><path d="M853 398.8C853 388 858 380 867.3 374.7C873 371.8 880 370.5 888.1 373.6L895 376L872 420L864 419.7C857 416 853 408 853 398.8Z" fill="#fff" stroke="#000" stroke-width="0.85"/><path d="M857 400C857 390 862 383 870 378C876 375 882 374.5 889 376" fill="none" stroke="#000" stroke-width="0.7" /><ellipse cx="847" cy="359.3" rx="3.0" ry="2.55" transform="rotate(30 847 359.3)" fill="#fff" stroke="#000" stroke-width="0.8"/><ellipse cx="847" cy="359.3" rx="1.35" ry="1.2000000000000002" transform="rotate(30 847 359.3)" fill="none" stroke="#000" stroke-width="0.6"/><ellipse cx="858.5" cy="365.3" rx="3.0" ry="2.55" transform="rotate(30 858.5 365.3)" fill="#fff" stroke="#000" stroke-width="0.8"/><ellipse cx="858.5" cy="365.3" rx="1.35" ry="1.2000000000000002" transform="rotate(30 858.5 365.3)" fill="none" stroke="#000" stroke-width="0.6"/><ellipse cx="873.8" cy="365.9" rx="3.0" ry="2.55" transform="rotate(30 873.8 365.9)" fill="#fff" stroke="#000" stroke-width="0.8"/><ellipse cx="873.8" cy="365.9" rx="1.35" ry="1.2000000000000002" transform="rotate(30 873.8 365.9)" fill="none" stroke="#000" stroke-width="0.6"/><ellipse cx="833.2" cy="376.3" rx="3.0" ry="2.55" transform="rotate(30 833.2 376.3)" fill="#fff" stroke="#000" stroke-width="0.8"/><ellipse cx="833.2" cy="376.3" rx="1.35" ry="1.2000000000000002" transform="rotate(30 833.2 376.3)" fill="none" stroke="#000" stroke-width="0.6"/><ellipse cx="843" cy="381.3" rx="3.0" ry="2.55" transform="rotate(30 843 381.3)" fill="#fff" stroke="#000" stroke-width="0.8"/><ellipse cx="843" cy="381.3" rx="1.35" ry="1.2000000000000002" transform="rotate(30 843 381.3)" fill="none" stroke="#000" stroke-width="0.6"/><ellipse cx="828.8" cy="402.1" rx="3.0" ry="2.55" transform="rotate(30 828.8 402.1)" fill="#fff" stroke="#000" stroke-width="0.8"/><ellipse cx="828.8" cy="402.1" rx="1.35" ry="1.2000000000000002" transform="rotate(30 828.8 402.1)" fill="none" stroke="#000" stroke-width="0.6"/><ellipse cx="841.4" cy="407.6" rx="3.0" ry="2.55" transform="rotate(30 841.4 407.6)" fill="#fff" stroke="#000" stroke-width="0.8"/><ellipse cx="841.4" cy="407.6" rx="1.35" ry="1.2000000000000002" transform="rotate(30 841.4 407.6)" fill="none" stroke="#000" stroke-width="0.6"/><path d="M860.7 394.5L890.3 374.7C892 373.5 895 373 897 374L948.9 404C951 405.5 951 408 949.5 409.5L927 422.6C922 425.5 917 426 913 424.6L860 396.5Z" fill="#fff" stroke="#000" stroke-width="0.85"/><path d="M860 397.8L914.5 428.7C919 430 923 429 927 426.7L950.2 411" fill="none" stroke="#000" stroke-width="0.75" /><path d="M859.6 393.7V398" fill="none" stroke="#000" stroke-width="0.7" /><ellipse cx="911" cy="388.2" rx="2.2" ry="1.5" transform="rotate(0 911 388.2)" fill="none" stroke="#000" stroke-width="0.7"/><ellipse cx="922" cy="393.7" rx="4.2" ry="3.1" transform="rotate(0 922 393.7)" fill="none" stroke="#000" stroke-width="0.7"/><ellipse cx="929" cy="398.5" rx="2.3" ry="1.6" transform="rotate(0 929 398.5)" fill="none" stroke="#000" stroke-width="0.7"/><ellipse cx="886.4" cy="402.7" rx="2.2" ry="1.6" transform="rotate(0 886.4 402.7)" fill="none" stroke="#000" stroke-width="0.7"/><ellipse cx="895.3" cy="409.2" rx="4.2" ry="3" transform="rotate(0 895.3 409.2)" fill="none" stroke="#000" stroke-width="0.7"/><ellipse cx="904.2" cy="413" rx="2.3" ry="1.5" transform="rotate(0 904.2 413)" fill="none" stroke="#000" stroke-width="0.7"/><path d="M1002.1 429.2C1008 425 1013 422 1018.6 420.9L1026.8 419.9L1040 440L1030 470L998 451.8Z" fill="#fff" stroke="#000" stroke-width="0.8"/><path d="M1008 431L1018.6 428.5L1019 432L1008.5 434.5Z" fill="none" stroke="#000" stroke-width="0.6" /><path d="M1002.1 445.6C1006 443 1014 443 1020 446C1021 450 1019 455 1015 456C1009 456.5 1003 452 1002.1 445.6Z" fill="#fff" stroke="#000" stroke-width="0.7"/><path d="M966 430.2C960 435 956 440 954.7 443.6C951 450 949.5 456 949.6 462.1C949 469 950.5 475 952.7 480.7C955 486 959 490 963 493C968 495 972.5 496 977.4 496.1L991.8 497.1L1002 452L1002.1 429.2C998 427.5 996 426.5 993.9 426C989 424.5 985 423.5 981.5 424C976 425.5 971 427.5 966 430.2Z" fill="#fff" stroke="#000" stroke-width="0.85"/><path d="M969.2 434.3C963 440 960 445 958.8 449.8C956.5 456 955.5 462 955.8 468.3C956 474 958 480 960.9 484.8C964 489 967.5 491.5 971.2 493" fill="none" stroke="#000" stroke-width="0.7" /><path d="M963 431.5L968 426.5C973 423 978 421.5 983 421L992 423" fill="none" stroke="#000" stroke-width="0.7" /><ellipse cx="984" cy="434.3" rx="9" ry="6.3" transform="rotate(-10 984 434.3)" fill="none" stroke="#000" stroke-width="0.75"/><path d="M960.9 458C964 455 968 453.5 971.2 453.9C973.5 455 974.3 457 974.3 460V488.9" fill="none" stroke="#000" stroke-width="0.7" /><path d="M965 456.5C968 459 969 463 969 468" fill="none" stroke="#000" stroke-width="0.6" /><path d="M968 471.4H974.3V493H968Z" fill="#fff" stroke="#000" stroke-width="0.7"/><path d="M1018.6 420.9C1025 421 1032 422 1037.1 424C1042 428 1046 431 1048.5 435.3C1052 440 1054 446 1054.7 451.8C1055.5 457 1055 463 1053.6 468.3C1052 472 1050 474.5 1047.5 476.5L1035 470L1012 436Z" fill="#fff" stroke="#000" stroke-width="0.85"/><path d="M1016.6 424C1024 424.5 1030 425.5 1034 428C1039 431.5 1042.5 435.5 1044.5 440.5C1047.5 446 1049 452 1049.5 458C1049.5 462 1049 466 1048.5 469.5" fill="none" stroke="#000" stroke-width="0.7" /><path d="M1014.5 427C1022 428 1027 429.5 1030.5 432C1035 435.5 1038 440 1040 445C1042 450 1043.5 456 1043.3 462C1043 466 1042.5 470 1042 472" fill="none" stroke="#000" stroke-width="0.7" /><path d="M1002.1 451.8C996 457 992 462 989.8 468.3C986.5 474 985 479 984.6 484.8C984.5 490 984.8 495 985.6 499.2C987.5 504 990.5 507.5 993.9 509.5C998 512 1003 513.5 1008.3 513.6C1012 513.6 1015.5 513.2 1018.6 512.6L1040 490L1046.4 462.1C1045 458 1043.5 455.5 1041.3 453.9C1037.5 451.5 1033 450.2 1029 449.8C1024.5 448.8 1020.5 448.5 1016.5 448.7C1011 449 1006 450 1002.1 451.8Z" fill="#fff" stroke="#000" stroke-width="0.85"/><path d="M1005.2 455.9C1000 461 996.5 467 993.9 472.4C991 478 989.8 484 989.8 490C990 496 991.5 501 994 504.5C997 507.5 1000.5 509.5 1005 510.5" fill="none" stroke="#000" stroke-width="0.7" /><path d="M1000 468C1004 462 1010 457 1016 454.5C1022 452.5 1030 452.5 1036 455" fill="none" stroke="#000" stroke-width="0.6" /><path d="M1012.5 454.4C1006 459 1000 466 997 474C994 482 993.5 490 994.5 497C996 503 999 508 1004 511" fill="none" stroke="#000" stroke-width="0.6" /><path d="M1008 462C1003 468 1000.5 476 1000 484C999.5 492 1001 499 1004.5 504" fill="none" stroke="#000" stroke-width="0.55" /><path d="M1019 462C1025 458 1033 458 1040 462" fill="none" stroke="#000" stroke-width="0.55" /><path d="M1020 466C1015 472 1012 480 1012 488C1012 496 1015 503 1020 508" fill="none" stroke="#000" stroke-width="0.55" /><path d="M969.7 428C973 425 977 423 981.2 423C986 423 990 425.5 994.4 428.8" fill="none" stroke="#000" stroke-width="0.7" /><path d="M953.2 454.4C956 449 959 446 962 444" fill="none" stroke="#000" stroke-width="0.6" /><path d="M964 446C960 455 958.5 465 959.5 474C960.5 482 963 487 967 490" fill="none" stroke="#000" stroke-width="0.6" /><path d="M982.8 466C987 464.5 990 466 991.5 470" fill="none" stroke="#000" stroke-width="0.6" /><path d="M980 470C977 478 977 488 981 496M986 468C983 476 983 488 987 497" fill="none" stroke="#000" stroke-width="0.55" /><path d="M1020.7 470.4C1024 472 1027 474 1028.9 476.5C1032 480.5 1034.5 484.5 1036.1 488.9C1037.8 492.5 1039 496 1039.2 499.2C1039 502 1037.5 504.5 1035.1 506.4C1032 506.5 1029 506.2 1026.8 505.4C1023 503 1020.5 500.5 1018.6 497.1C1017 493 1016.3 489 1016.5 484.8C1016.8 479.5 1018 474.5 1020.7 470.4Z" fill="#fff" stroke="#000" stroke-width="0.8"/><path d="M1024 476C1027 483 1029 492 1029 505" fill="none" stroke="#000" stroke-width="0.6" /><path d="M1020.7 460L1027 458C1031 459 1033 463 1034 467" fill="none" stroke="#000" stroke-width="0.6" /><ellipse cx="1032" cy="471.4" rx="5" ry="3.4" transform="rotate(-5 1032 471.4)" fill="#fff" stroke="#000" stroke-width="0.8"/><ellipse cx="1032" cy="471.4" rx="2.4" ry="1.5" transform="rotate(-5 1032 471.4)" fill="none" stroke="#000" stroke-width="0.6"/><path d="M1031 482.7L1051.6 473.5L1054.7 476.5L1034 486.8Z" fill="#fff" stroke="#000" stroke-width="0.8"/><path d="M1033.5 485L1053 475.5" fill="none" stroke="#000" stroke-width="1.0" /><ellipse cx="1032.5" cy="485" rx="2.3" ry="1.9" transform="rotate(20 1032.5 485)" fill="#fff" stroke="#000" stroke-width="0.7"/><ellipse cx="1016.5" cy="458" rx="2.2" ry="1.87" transform="rotate(30 1016.5 458)" fill="#fff" stroke="#000" stroke-width="0.8"/><ellipse cx="1016.5" cy="458" rx="0.9900000000000001" ry="0.8800000000000001" transform="rotate(30 1016.5 458)" fill="none" stroke="#000" stroke-width="0.6"/><ellipse cx="1025.8" cy="452.8" rx="2.2" ry="1.87" transform="rotate(30 1025.8 452.8)" fill="#fff" stroke="#000" stroke-width="0.8"/><ellipse cx="1025.8" cy="452.8" rx="0.9900000000000001" ry="0.8800000000000001" transform="rotate(30 1025.8 452.8)" fill="none" stroke="#000" stroke-width="0.6"/><ellipse cx="1040.2" cy="455.9" rx="2.2" ry="1.87" transform="rotate(30 1040.2 455.9)" fill="#fff" stroke="#000" stroke-width="0.8"/><ellipse cx="1040.2" cy="455.9" rx="0.9900000000000001" ry="0.8800000000000001" transform="rotate(30 1040.2 455.9)" fill="none" stroke="#000" stroke-width="0.6"/><ellipse cx="1043.3" cy="465.2" rx="2.2" ry="1.87" transform="rotate(30 1043.3 465.2)" fill="#fff" stroke="#000" stroke-width="0.8"/><ellipse cx="1043.3" cy="465.2" rx="0.9900000000000001" ry="0.8800000000000001" transform="rotate(30 1043.3 465.2)" fill="none" stroke="#000" stroke-width="0.6"/><ellipse cx="1002.1" cy="478.6" rx="2.2" ry="1.87" transform="rotate(30 1002.1 478.6)" fill="#fff" stroke="#000" stroke-width="0.8"/><ellipse cx="1002.1" cy="478.6" rx="0.9900000000000001" ry="0.8800000000000001" transform="rotate(30 1002.1 478.6)" fill="none" stroke="#000" stroke-width="0.6"/><ellipse cx="998" cy="492" rx="2.2" ry="1.87" transform="rotate(30 998 492)" fill="#fff" stroke="#000" stroke-width="0.8"/><ellipse cx="998" cy="492" rx="0.9900000000000001" ry="0.8800000000000001" transform="rotate(30 998 492)" fill="none" stroke="#000" stroke-width="0.6"/><ellipse cx="1003.2" cy="507.5" rx="2.2" ry="1.87" transform="rotate(30 1003.2 507.5)" fill="#fff" stroke="#000" stroke-width="0.8"/><ellipse cx="1003.2" cy="507.5" rx="0.9900000000000001" ry="0.8800000000000001" transform="rotate(30 1003.2 507.5)" fill="none" stroke="#000" stroke-width="0.6"/><ellipse cx="1009.3" cy="510.5" rx="2.2" ry="1.87" transform="rotate(30 1009.3 510.5)" fill="#fff" stroke="#000" stroke-width="0.8"/><ellipse cx="1009.3" cy="510.5" rx="0.9900000000000001" ry="0.8800000000000001" transform="rotate(30 1009.3 510.5)" fill="none" stroke="#000" stroke-width="0.6"/><ellipse cx="1033" cy="513.6" rx="3.3" ry="2.8049999999999997" transform="rotate(30 1033 513.6)" fill="#fff" stroke="#000" stroke-width="0.8"/><ellipse cx="1033" cy="513.6" rx="1.4849999999999999" ry="1.32" transform="rotate(30 1033 513.6)" fill="none" stroke="#000" stroke-width="0.6"/><ellipse cx="965.5" cy="432.5" rx="2.6" ry="2.21" transform="rotate(30 965.5 432.5)" fill="#fff" stroke="#000" stroke-width="0.8"/><ellipse cx="965.5" cy="432.5" rx="1.1700000000000002" ry="1.04" transform="rotate(30 965.5 432.5)" fill="none" stroke="#000" stroke-width="0.6"/></svg>
</body></html>
